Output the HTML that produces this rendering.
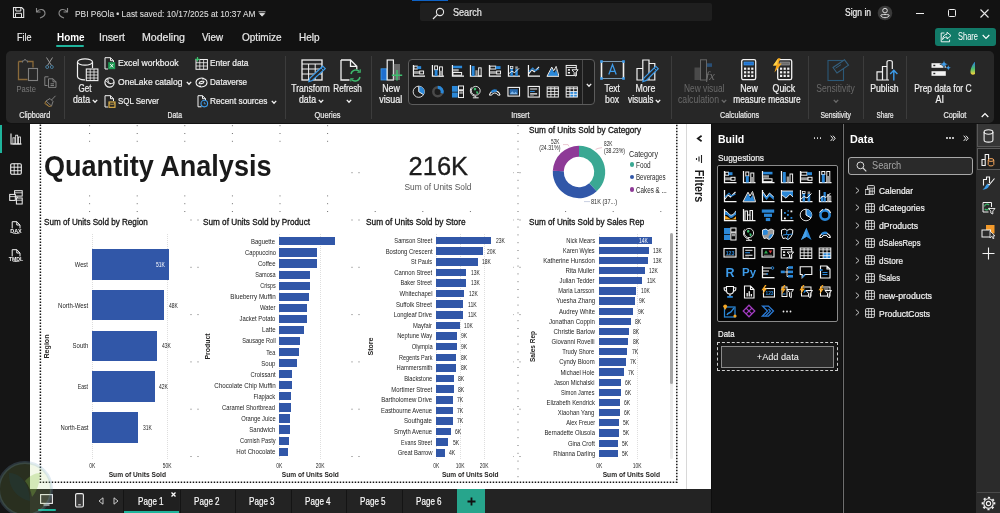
<!DOCTYPE html>
<html><head><meta charset="utf-8"><title>PBI</title>
<style>
html,body{margin:0;padding:0;}
body{width:1000px;height:513px;overflow:hidden;background:#111;font-family:"Liberation Sans",sans-serif;position:relative;}
.t{position:absolute;white-space:nowrap;display:block;}
.b{position:absolute;box-sizing:border-box;display:block;}
</style></head><body><div id="app" style="position:absolute;left:0;top:0;width:1000px;height:513px;overflow:hidden;will-change:transform;">
<div class="b" style="left:0px;top:0px;width:1000px;height:124px;background:#121212;"></div>
<div class="b" style="left:420px;top:3px;width:292px;height:18px;background:#1f1f1f;border-radius:2px;"></div>
<div class="b" style="left:412px;top:0px;width:36px;height:1px;background:#0f62c4;"></div>
<svg class="b" style="left:432px;top:6.6px;" width="13" height="13" viewBox="0 0 13 13"><circle cx="8" cy="5" r="3.6" fill="none" stroke="#e6e6e6" stroke-width="1.1"/><path d="M5.4 7.6 L1 12" stroke="#e6e6e6" stroke-width="1.2" fill="none"/></svg>
<span class="t" style="left:452.50px;top:6.30px;font-size:10.5px;line-height:12.60px;color:#e6e6e6;-webkit-text-stroke:0.22px #e6e6e6;transform:scaleX(0.8656);transform-origin:0 50%;">Search</span>
<svg class="b" style="left:12px;top:6px;" width="13" height="13" viewBox="0 0 13 13"><path d="M1.5 1.5 h8.2 l2 2 v8 h-10.2z" fill="none" stroke="#e6e6e6" stroke-width="1.1"/><path d="M3.8 1.8 v3.2 h5 v-3.2 M3.5 11.3 v-4 h6 v4" fill="none" stroke="#e6e6e6" stroke-width="1"/></svg>
<svg class="b" style="left:35px;top:7px;" width="12" height="12" viewBox="0 0 12 12"><path d="M1.5 1 v4 h4 M1.8 4.8 C4 1.5 9.5 1.5 10 6 C10.2 8.5 8 10 5 11" fill="none" stroke="#8a8a8a" stroke-width="1.1"/></svg>
<svg class="b" style="left:57px;top:7px;" width="12" height="12" viewBox="0 0 12 12"><path d="M10.5 1 v4 h-4 M10.2 4.8 C8 1.5 2.5 1.5 2 6 C1.8 8.5 4 10 7 11" fill="none" stroke="#8a8a8a" stroke-width="1.1"/></svg>
<span class="t" style="left:74.50px;top:8.10px;font-size:9.5px;line-height:11.40px;color:#dcdcdc;transform:scaleX(0.8802);transform-origin:0 50%;-webkit-text-stroke:0.1px #dcdcdc;">PBI P6Ola • Last saved: 10/17/2025 at 10:37 AM</span>
<svg class="b" style="left:258px;top:10.5px;" width="9" height="6" viewBox="0 0 9 6"><path d="M0.5 0.8 h7 M1.6 2.6 h5 l-2.5 2.6z" stroke="#ddd" stroke-width="0.9" fill="#ddd"/></svg>
<span class="t" style="left:844.50px;top:6.80px;font-size:10px;line-height:12.00px;color:#eeeeee;-webkit-text-stroke:0.22px #eeeeee;transform:scaleX(0.8503);transform-origin:0 50%;">Sign in</span>
<svg class="b" style="left:877px;top:4.8px;" width="16" height="16" viewBox="0 0 16 16"><circle cx="8" cy="8" r="7.3" fill="#3a3a3a"/><circle cx="8" cy="5.6" r="2.3" fill="none" stroke="#ddd" stroke-width="1"/><path d="M3.8 10.2 C4 13.5 12 13.5 12.2 10.2 C12.2 9.3 3.8 9.3 3.8 10.2z" fill="none" stroke="#ddd" stroke-width="1"/></svg>
<div class="b" style="left:916px;top:12.5px;width:8px;height:1.2px;background:#eeeeee;"></div>
<div class="b" style="left:948px;top:8.6px;width:8.4px;height:8.4px;border:1.2px solid #eeeeee;border-radius:1.5px;"></div>
<svg class="b" style="left:980px;top:8.6px;" width="9" height="9" viewBox="0 0 9 9"><path d="M0.5 0.5 L8.5 8.5 M8.5 0.5 L0.5 8.5" stroke="#e6e6e6" stroke-width="1.1"/></svg>
<span class="t" style="left:16.50px;top:31.20px;font-size:10.5px;line-height:12.60px;color:#e6e6e6;-webkit-text-stroke:0.22px #e6e6e6;transform:scaleX(0.8570);transform-origin:0 50%;">File</span>
<span class="t" style="left:56.50px;top:31.20px;font-size:10.5px;line-height:12.60px;color:#fff;font-weight:bold;transform:scaleX(0.9427);transform-origin:0 50%;">Home</span>
<div class="b" style="left:56px;top:45px;width:28px;height:2px;background:#1fb49c;border-radius:1px;"></div>
<span class="t" style="left:99.00px;top:31.20px;font-size:10.5px;line-height:12.60px;color:#e6e6e6;-webkit-text-stroke:0.22px #e6e6e6;transform:scaleX(0.9901);transform-origin:0 50%;">Insert</span>
<span class="t" style="left:142.00px;top:31.20px;font-size:10.5px;line-height:12.60px;color:#e6e6e6;-webkit-text-stroke:0.22px #e6e6e6;transform:scaleX(1.0091);transform-origin:0 50%;">Modeling</span>
<span class="t" style="left:202.00px;top:31.20px;font-size:10.5px;line-height:12.60px;color:#e6e6e6;-webkit-text-stroke:0.22px #e6e6e6;transform:scaleX(0.9304);transform-origin:0 50%;">View</span>
<span class="t" style="left:242.00px;top:31.20px;font-size:10.5px;line-height:12.60px;color:#e6e6e6;-webkit-text-stroke:0.22px #e6e6e6;transform:scaleX(0.9535);transform-origin:0 50%;">Optimize</span>
<span class="t" style="left:299.00px;top:31.20px;font-size:10.5px;line-height:12.60px;color:#e6e6e6;-webkit-text-stroke:0.22px #e6e6e6;transform:scaleX(0.9493);transform-origin:0 50%;">Help</span>
<div class="b" style="left:935px;top:28px;width:61px;height:18px;background:#127a68;border-radius:3px;"></div>
<svg class="b" style="left:940px;top:31px;" width="12" height="12" viewBox="0 0 12 12"><path d="M7 1.2 L11 4.6 L7 8 V6 C4.5 6 3.4 7 2.6 8.6 C2.8 5.4 4.4 3.4 7 3.2z" fill="none" stroke="#fff" stroke-width="0.9" stroke-linejoin="round"/><path d="M4.4 2 H1.2 V10.8 H9.6 V8.6" fill="none" stroke="#fff" stroke-width="0.9"/></svg>
<span class="t" style="left:958.00px;top:31.00px;font-size:10px;line-height:12.00px;color:#fff;transform:scaleX(0.7495);transform-origin:0 50%;">Share</span>
<svg class="b" style="left:982px;top:34px;" width="8" height="6" viewBox="0 0 8 6"><path d="M0.7 1 L4 4.4 L7.3 1" fill="none" stroke="#fff" stroke-width="1.1"/></svg>
<div class="b" style="left:6px;top:51px;width:988px;height:72px;background:#272727;border-radius:5px;"></div>
<div class="b" style="left:63.5px;top:56px;width:1px;height:63px;background:#3c3c3c;"></div>
<div class="b" style="left:284.5px;top:56px;width:1px;height:63px;background:#3c3c3c;"></div>
<div class="b" style="left:370.5px;top:56px;width:1px;height:63px;background:#3c3c3c;"></div>
<div class="b" style="left:670.5px;top:56px;width:1px;height:63px;background:#3c3c3c;"></div>
<div class="b" style="left:808px;top:56px;width:1px;height:63px;background:#3c3c3c;"></div>
<div class="b" style="left:862.5px;top:56px;width:1px;height:63px;background:#3c3c3c;"></div>
<div class="b" style="left:906px;top:56px;width:1px;height:63px;background:#3c3c3c;"></div>
<span class="t" style="left:16.74px;top:110.52px;font-size:8.3px;line-height:9.96px;color:#e8e8e8;-webkit-text-stroke:0.22px #e8e8e8;transform:scaleX(0.8726);transform-origin:50% 50%;">Clipboard</span>
<span class="t" style="left:166.23px;top:110.52px;font-size:8.3px;line-height:9.96px;color:#e8e8e8;-webkit-text-stroke:0.22px #e8e8e8;transform:scaleX(0.8270);transform-origin:50% 50%;">Data</span>
<span class="t" style="left:312.97px;top:110.52px;font-size:8.3px;line-height:9.96px;color:#e8e8e8;-webkit-text-stroke:0.22px #e8e8e8;transform:scaleX(0.8946);transform-origin:50% 50%;">Queries</span>
<span class="t" style="left:509.62px;top:110.52px;font-size:8.3px;line-height:9.96px;color:#e8e8e8;-webkit-text-stroke:0.22px #e8e8e8;transform:scaleX(0.8912);transform-origin:50% 50%;">Insert</span>
<span class="t" style="left:716.89px;top:110.52px;font-size:8.3px;line-height:9.96px;color:#e8e8e8;-webkit-text-stroke:0.22px #e8e8e8;transform:scaleX(0.8626);transform-origin:50% 50%;">Calculations</span>
<span class="t" style="left:816.82px;top:110.52px;font-size:8.3px;line-height:9.96px;color:#e8e8e8;-webkit-text-stroke:0.22px #e8e8e8;transform:scaleX(0.8163);transform-origin:50% 50%;">Sensitivity</span>
<span class="t" style="left:874.43px;top:110.52px;font-size:8.3px;line-height:9.96px;color:#e8e8e8;-webkit-text-stroke:0.22px #e8e8e8;transform:scaleX(0.7675);transform-origin:50% 50%;">Share</span>
<span class="t" style="left:941.58px;top:110.52px;font-size:8.3px;line-height:9.96px;color:#e8e8e8;-webkit-text-stroke:0.22px #e8e8e8;transform:scaleX(0.8902);transform-origin:50% 50%;">Copilot</span>
<svg class="b" style="left:981px;top:112px;" width="8" height="6" viewBox="0 0 8 6"><path d="M0.7 5 L4 1.6 L7.3 5" fill="none" stroke="#fff" stroke-width="1.2"/></svg>
<span class="t" style="left:14.35px;top:82.80px;font-size:9.5px;line-height:11.40px;color:#7a7a7a;transform:scaleX(0.8027);transform-origin:50% 50%;">Paste</span>
<span class="t" style="left:77.44px;top:82.50px;font-size:10px;line-height:12.00px;color:#f0f0f0;-webkit-text-stroke:0.22px #f0f0f0;transform:scaleX(0.8066);transform-origin:50% 50%;">Get</span>
<span class="t" style="left:73.00px;top:94.00px;font-size:10px;line-height:12.00px;color:#f0f0f0;-webkit-text-stroke:0.22px #f0f0f0;transform:scaleX(0.8734);transform-origin:0 50%;">data</span>
<svg class="b" style="left:91.5px;top:99px;" width="6" height="5" viewBox="0 0 6 5"><path d="M0.8 0.9 L3 3.2 L5.2 0.9" fill="none" stroke="#f0f0f0" stroke-width="1.35"/></svg>
<span class="t" style="left:118.00px;top:56.80px;font-size:9.5px;line-height:11.40px;color:#f0f0f0;-webkit-text-stroke:0.22px #f0f0f0;transform:scaleX(0.9094);transform-origin:0 50%;">Excel workbook</span>
<span class="t" style="left:118.00px;top:75.80px;font-size:9.5px;line-height:11.40px;color:#f0f0f0;-webkit-text-stroke:0.22px #f0f0f0;transform:scaleX(0.8979);transform-origin:0 50%;">OneLake catalog</span>
<svg class="b" style="left:185.5px;top:81px;" width="6" height="5" viewBox="0 0 6 5"><path d="M0.8 0.9 L3 3.2 L5.2 0.9" fill="none" stroke="#f0f0f0" stroke-width="1.35"/></svg>
<span class="t" style="left:118.00px;top:94.80px;font-size:9.5px;line-height:11.40px;color:#f0f0f0;-webkit-text-stroke:0.22px #f0f0f0;transform:scaleX(0.8320);transform-origin:0 50%;">SQL Server</span>
<span class="t" style="left:210.00px;top:56.80px;font-size:9.5px;line-height:11.40px;color:#f0f0f0;-webkit-text-stroke:0.22px #f0f0f0;transform:scaleX(0.8783);transform-origin:0 50%;">Enter data</span>
<span class="t" style="left:210.00px;top:75.80px;font-size:9.5px;line-height:11.40px;color:#f0f0f0;-webkit-text-stroke:0.22px #f0f0f0;transform:scaleX(0.8545);transform-origin:0 50%;">Dataverse</span>
<span class="t" style="left:210.00px;top:94.80px;font-size:9.5px;line-height:11.40px;color:#f0f0f0;-webkit-text-stroke:0.22px #f0f0f0;transform:scaleX(0.8711);transform-origin:0 50%;">Recent sources</span>
<svg class="b" style="left:270.5px;top:100px;" width="6" height="5" viewBox="0 0 6 5"><path d="M0.8 0.9 L3 3.2 L5.2 0.9" fill="none" stroke="#f0f0f0" stroke-width="1.35"/></svg>
<span class="t" style="left:288.40px;top:82.50px;font-size:10px;line-height:12.00px;color:#f0f0f0;-webkit-text-stroke:0.22px #f0f0f0;transform:scaleX(0.8519);transform-origin:50% 50%;">Transform</span>
<span class="t" style="left:299.00px;top:94.00px;font-size:10px;line-height:12.00px;color:#f0f0f0;-webkit-text-stroke:0.22px #f0f0f0;transform:scaleX(0.8734);transform-origin:0 50%;">data</span>
<svg class="b" style="left:317.5px;top:99px;" width="6" height="5" viewBox="0 0 6 5"><path d="M0.8 0.9 L3 3.2 L5.2 0.9" fill="none" stroke="#f0f0f0" stroke-width="1.35"/></svg>
<span class="t" style="left:330.49px;top:82.50px;font-size:10px;line-height:12.00px;color:#f0f0f0;-webkit-text-stroke:0.22px #f0f0f0;transform:scaleX(0.8139);transform-origin:50% 50%;">Refresh</span>
<svg class="b" style="left:345.5px;top:99px;" width="6" height="5" viewBox="0 0 6 5"><path d="M0.8 0.9 L3 3.2 L5.2 0.9" fill="none" stroke="#f0f0f0" stroke-width="1.35"/></svg>
<span class="t" style="left:381.00px;top:82.50px;font-size:10px;line-height:12.00px;color:#f0f0f0;-webkit-text-stroke:0.22px #f0f0f0;transform:scaleX(0.8748);transform-origin:50% 50%;">New</span>
<span class="t" style="left:377.72px;top:94.00px;font-size:10px;line-height:12.00px;color:#f0f0f0;-webkit-text-stroke:0.22px #f0f0f0;transform:scaleX(0.8996);transform-origin:50% 50%;">visual</span>
<div class="b" style="left:408px;top:59px;width:187px;height:45.5px;background:#1d1d1d;border:1px solid #5c5c5c;border-radius:4px;"></div>
<div class="b" style="left:582px;top:60px;width:1px;height:43.5px;background:#4a4a4a;"></div>
<svg class="b" style="left:585.5px;top:83px;" width="6" height="5" viewBox="0 0 6 5"><path d="M0.8 0.9 L3 3.2 L5.2 0.9" fill="none" stroke="#f0f0f0" stroke-width="1.35"/></svg>
<span class="t" style="left:603.33px;top:82.50px;font-size:10px;line-height:12.00px;color:#f0f0f0;-webkit-text-stroke:0.22px #f0f0f0;transform:scaleX(0.8452);transform-origin:50% 50%;">Text</span>
<span class="t" style="left:603.94px;top:94.00px;font-size:10px;line-height:12.00px;color:#f0f0f0;-webkit-text-stroke:0.22px #f0f0f0;transform:scaleX(0.8683);transform-origin:50% 50%;">box</span>
<span class="t" style="left:634.11px;top:82.50px;font-size:10px;line-height:12.00px;color:#f0f0f0;-webkit-text-stroke:0.22px #f0f0f0;transform:scaleX(0.8778);transform-origin:50% 50%;">More</span>
<span class="t" style="left:628.00px;top:94.00px;font-size:10px;line-height:12.00px;color:#f0f0f0;-webkit-text-stroke:0.22px #f0f0f0;transform:scaleX(0.8342);transform-origin:0 50%;">visuals</span>
<svg class="b" style="left:655px;top:99px;" width="6" height="5" viewBox="0 0 6 5"><path d="M0.8 0.9 L3 3.2 L5.2 0.9" fill="none" stroke="#f0f0f0" stroke-width="1.35"/></svg>
<span class="t" style="left:679.82px;top:82.50px;font-size:10px;line-height:12.00px;color:#6a6a6a;transform:scaleX(0.8376);transform-origin:50% 50%;">New visual</span>
<span class="t" style="left:678.00px;top:94.00px;font-size:10px;line-height:12.00px;color:#6a6a6a;transform:scaleX(0.8677);transform-origin:0 50%;">calculation</span>
<svg class="b" style="left:720.5px;top:99px;" width="6" height="5" viewBox="0 0 6 5"><path d="M0.8 0.9 L3 3.2 L5.2 0.9" fill="none" stroke="#6a6a6a" stroke-width="1.35"/></svg>
<span class="t" style="left:739.00px;top:82.50px;font-size:10px;line-height:12.00px;color:#f0f0f0;-webkit-text-stroke:0.22px #f0f0f0;transform:scaleX(0.8748);transform-origin:50% 50%;">New</span>
<span class="t" style="left:729.55px;top:94.00px;font-size:10px;line-height:12.00px;color:#f0f0f0;-webkit-text-stroke:0.22px #f0f0f0;transform:scaleX(0.8353);transform-origin:50% 50%;">measure</span>
<span class="t" style="left:771.22px;top:82.50px;font-size:10px;line-height:12.00px;color:#f0f0f0;-webkit-text-stroke:0.22px #f0f0f0;transform:scaleX(0.8802);transform-origin:50% 50%;">Quick</span>
<span class="t" style="left:764.55px;top:94.00px;font-size:10px;line-height:12.00px;color:#f0f0f0;-webkit-text-stroke:0.22px #f0f0f0;transform:scaleX(0.8353);transform-origin:50% 50%;">measure</span>
<span class="t" style="left:812.99px;top:82.50px;font-size:10px;line-height:12.00px;color:#6a6a6a;transform:scaleX(0.8553);transform-origin:50% 50%;">Sensitivity</span>
<svg class="b" style="left:832.5px;top:99px;" width="6" height="5" viewBox="0 0 6 5"><path d="M0.8 0.9 L3 3.2 L5.2 0.9" fill="none" stroke="#6a6a6a" stroke-width="1.35"/></svg>
<span class="t" style="left:868.10px;top:82.50px;font-size:10px;line-height:12.00px;color:#f0f0f0;-webkit-text-stroke:0.22px #f0f0f0;transform:scaleX(0.8689);transform-origin:50% 50%;">Publish</span>
<span class="t" style="left:909.09px;top:82.50px;font-size:10px;line-height:12.00px;color:#f0f0f0;-webkit-text-stroke:0.22px #f0f0f0;transform:scaleX(0.8479);transform-origin:50% 50%;">Prep data for C</span>
<span class="t" style="left:935.28px;top:94.00px;font-size:10px;line-height:12.00px;color:#f0f0f0;-webkit-text-stroke:0.22px #f0f0f0;transform:scaleX(0.8996);transform-origin:50% 50%;">AI</span>
<div class="b" style="left:0px;top:124px;width:30px;height:389px;background:#151515;"></div>
<div class="b" style="left:0px;top:125px;width:2px;height:28px;background:#1fb49c;"></div>
<div class="b" style="left:30px;top:124px;width:657px;height:365px;background:#ffffff;"></div>
<div class="b" style="left:686px;top:124px;width:1px;height:365px;background:#d8d8d8;"></div>
<div class="b" style="left:687px;top:124px;width:24px;height:365px;background:#ffffff;"></div>
<svg class="b" style="left:0;top:0" width="700" height="490" viewBox="0 0 700 490"><defs><pattern id="gv" x="41.5" y="125.2" width="47.6" height="7.8" patternUnits="userSpaceOnUse"><rect x="0" y="0" width="1" height="1" fill="#6e6e6e"/></pattern><pattern id="gh" x="43.5" y="124.9" width="7" height="47.3" patternUnits="userSpaceOnUse"><rect x="0" y="0" width="1" height="1" fill="#6e6e6e"/></pattern></defs><rect x="60" y="124" width="612" height="357" fill="url(#gv)"/><rect x="43" y="160" width="632" height="318" fill="url(#gh)"/></svg>
<div class="b" style="left:42.5px;top:143px;width:305px;height:48px;background:#fff;"></div>
<div class="b" style="left:363px;top:124.5px;width:150px;height:82.5px;background:#fff;"></div>
<div class="b" style="left:523px;top:124.5px;width:153.5px;height:84px;background:#fff;"></div>
<div class="b" style="left:42.5px;top:214.5px;width:146px;height:266px;background:#fff;"></div>
<div class="b" style="left:200px;top:214.5px;width:148px;height:266px;background:#fff;"></div>
<div class="b" style="left:363px;top:214.5px;width:150px;height:266px;background:#fff;"></div>
<div class="b" style="left:523px;top:214.5px;width:153.5px;height:266px;background:#fff;"></div>
<svg class="b" style="left:0;top:0" width="700" height="490" viewBox="0 0 700 490"><path d="M40.4 124.5 V482.2 H676.8 V124.5" fill="none" stroke="#161616" stroke-width="1.5" stroke-dasharray="1.5 1.5"/></svg>
<span class="t" style="left:43.50px;top:148.30px;font-size:29.5px;line-height:35.40px;color:#1a1a1a;font-weight:bold;transform:scaleX(0.9170);transform-origin:0 50%;">Quantity Analysis</span>
<span class="t" style="left:408.14px;top:150.90px;font-size:26px;line-height:31.20px;color:#1c1c1c;transform:scaleX(0.9798);transform-origin:50% 50%;-webkit-text-stroke:0.35px #1c1c1c;">216K</span>
<span class="t" style="left:404.48px;top:181.90px;font-size:8.5px;line-height:10.20px;color:#555;transform:scaleX(0.9849);transform-origin:50% 50%;">Sum of Units Sold</span>
<span class="t" style="left:43.50px;top:216.60px;font-size:9px;line-height:10.80px;color:#141414;transform:scaleX(0.9013);transform-origin:0 50%;-webkit-text-stroke:0.3px #141414;">Sum of Units Sold by Region</span>
<span class="t" style="left:202.60px;top:216.60px;font-size:9px;line-height:10.80px;color:#141414;transform:scaleX(0.9102);transform-origin:0 50%;-webkit-text-stroke:0.3px #141414;">Sum of Units Sold by Product</span>
<span class="t" style="left:366.00px;top:216.60px;font-size:9px;line-height:10.80px;color:#141414;transform:scaleX(0.9209);transform-origin:0 50%;-webkit-text-stroke:0.3px #141414;">Sum of Units Sold by Store</span>
<span class="t" style="left:528.60px;top:216.60px;font-size:9px;line-height:10.80px;color:#141414;transform:scaleX(0.8996);transform-origin:0 50%;-webkit-text-stroke:0.3px #141414;">Sum of Units Sold by Sales Rep</span>
<span class="t" style="left:528.50px;top:124.80px;font-size:9px;line-height:10.80px;color:#141414;transform:scaleX(0.9118);transform-origin:0 50%;-webkit-text-stroke:0.3px #141414;">Sum of Units Sold by Category</span>
<div class="b" style="left:92px;top:234px;width:0;height:225px;border-left:1px dotted #dedede;"></div>
<div class="b" style="left:167px;top:234px;width:0;height:225px;border-left:1px dotted #dedede;"></div>
<div class="b" style="left:92.2px;top:249.0px;width:77.0px;height:30.6px;background:#3157a8;"></div>
<span class="t" style="left:72.18px;top:260.70px;font-size:7px;line-height:8.40px;color:#1e1e1e;transform:scaleX(0.8218);transform-origin:100% 50%;">West</span>
<span class="t" style="left:155.50px;top:260.70px;font-size:7px;line-height:8.40px;color:#fff;transform:scaleX(0.7065);transform-origin:0 50%;">51K</span>
<div class="b" style="left:92.2px;top:289.8px;width:71.5px;height:30.6px;background:#3157a8;"></div>
<span class="t" style="left:52.73px;top:301.50px;font-size:7px;line-height:8.40px;color:#1e1e1e;transform:scaleX(0.8563);transform-origin:100% 50%;">North-West</span>
<span class="t" style="left:168.60px;top:301.50px;font-size:7px;line-height:8.40px;color:#1e1e1e;transform:scaleX(0.7065);transform-origin:0 50%;">48K</span>
<div class="b" style="left:92.2px;top:330.6px;width:64.8px;height:30.6px;background:#3157a8;"></div>
<span class="t" style="left:69.71px;top:342.30px;font-size:7px;line-height:8.40px;color:#1e1e1e;transform:scaleX(0.8582);transform-origin:100% 50%;">South</span>
<span class="t" style="left:161.50px;top:342.30px;font-size:7px;line-height:8.40px;color:#1e1e1e;transform:scaleX(0.7065);transform-origin:0 50%;">43K</span>
<div class="b" style="left:92.2px;top:371.4px;width:62.5px;height:30.6px;background:#3157a8;"></div>
<span class="t" style="left:73.99px;top:383.10px;font-size:7px;line-height:8.40px;color:#1e1e1e;transform:scaleX(0.7353);transform-origin:100% 50%;">East</span>
<span class="t" style="left:158.80px;top:383.10px;font-size:7px;line-height:8.40px;color:#1e1e1e;transform:scaleX(0.7065);transform-origin:0 50%;">42K</span>
<div class="b" style="left:92.2px;top:412.2px;width:45.8px;height:30.6px;background:#3157a8;"></div>
<span class="t" style="left:54.54px;top:423.90px;font-size:7px;line-height:8.40px;color:#1e1e1e;transform:scaleX(0.8369);transform-origin:100% 50%;">North-East</span>
<span class="t" style="left:142.70px;top:423.90px;font-size:7px;line-height:8.40px;color:#1e1e1e;transform:scaleX(0.7065);transform-origin:0 50%;">31K</span>
<span class="t" style="left:87.92px;top:462.10px;font-size:7px;line-height:8.40px;color:#2a2a2a;transform:scaleX(0.7007);transform-origin:50% 50%;">0K</span>
<span class="t" style="left:160.97px;top:462.10px;font-size:7px;line-height:8.40px;color:#2a2a2a;transform:scaleX(0.7065);transform-origin:50% 50%;">50K</span>
<span class="t" style="left:104.71px;top:470.20px;font-size:7.5px;line-height:9.00px;color:#252423;font-weight:bold;transform:scaleX(0.8872);transform-origin:50% 50%;">Sum of Units Sold</span>
<span class="t" style="left:34.29px;top:341.50px;font-size:7.5px;line-height:9px;font-weight:bold;color:#252423;transform:rotate(-90deg) scaleX(0.944);transform-origin:50% 50%;">Region</span>
<div class="b" style="left:279px;top:234px;width:0;height:225px;border-left:1px dotted #dedede;"></div>
<div class="b" style="left:320px;top:234px;width:0;height:225px;border-left:1px dotted #dedede;"></div>
<div class="b" style="left:279px;top:237.3px;width:55.7px;height:8.2px;background:#3157a8;"></div>
<span class="t" style="left:247.48px;top:237.80px;font-size:7px;line-height:8.40px;color:#1e1e1e;transform:scaleX(0.8564);transform-origin:100% 50%;">Baguette</span>
<div class="b" style="left:279px;top:248.37px;width:38.2px;height:8.2px;background:#3157a8;"></div>
<span class="t" style="left:238.53px;top:248.87px;font-size:7px;line-height:8.40px;color:#1e1e1e;transform:scaleX(0.8385);transform-origin:100% 50%;">Cappuccino</span>
<div class="b" style="left:279px;top:259.44px;width:38.2px;height:8.2px;background:#3157a8;"></div>
<span class="t" style="left:255.00px;top:259.94px;font-size:7px;line-height:8.40px;color:#1e1e1e;transform:scaleX(0.8537);transform-origin:100% 50%;">Coffee</span>
<div class="b" style="left:279px;top:270.51px;width:31px;height:8.2px;background:#3157a8;"></div>
<span class="t" style="left:249.82px;top:271.01px;font-size:7px;line-height:8.40px;color:#1e1e1e;transform:scaleX(0.7983);transform-origin:100% 50%;">Samosa</span>
<div class="b" style="left:279px;top:281.58px;width:30.6px;height:8.2px;background:#3157a8;"></div>
<span class="t" style="left:255.66px;top:282.08px;font-size:7px;line-height:8.40px;color:#1e1e1e;transform:scaleX(0.7814);transform-origin:100% 50%;">Crisps</span>
<div class="b" style="left:279px;top:292.65px;width:29.8px;height:8.2px;background:#3157a8;"></div>
<span class="t" style="left:224.66px;top:293.15px;font-size:7px;line-height:8.40px;color:#1e1e1e;transform:scaleX(0.8950);transform-origin:100% 50%;">Blueberry Muffin</span>
<div class="b" style="left:279px;top:303.72px;width:27.9px;height:8.2px;background:#3157a8;"></div>
<span class="t" style="left:257.09px;top:304.22px;font-size:7px;line-height:8.40px;color:#1e1e1e;transform:scaleX(0.8420);transform-origin:100% 50%;">Water</span>
<div class="b" style="left:279px;top:314.79px;width:27.9px;height:8.2px;background:#3157a8;"></div>
<span class="t" style="left:233.09px;top:315.29px;font-size:7px;line-height:8.40px;color:#1e1e1e;transform:scaleX(0.8488);transform-origin:100% 50%;">Jacket Potato</span>
<div class="b" style="left:279px;top:325.86px;width:24.9px;height:8.2px;background:#3157a8;"></div>
<span class="t" style="left:259.93px;top:326.36px;font-size:7px;line-height:8.40px;color:#1e1e1e;transform:scaleX(0.8671);transform-origin:100% 50%;">Latte</span>
<div class="b" style="left:279px;top:336.93px;width:20.8px;height:8.2px;background:#3157a8;"></div>
<span class="t" style="left:233.86px;top:337.43px;font-size:7px;line-height:8.40px;color:#1e1e1e;transform:scaleX(0.8045);transform-origin:100% 50%;">Sausage Roll</span>
<div class="b" style="left:279px;top:348.0px;width:20px;height:8.2px;background:#3157a8;"></div>
<span class="t" style="left:264.21px;top:348.50px;font-size:7px;line-height:8.40px;color:#1e1e1e;transform:scaleX(0.7974);transform-origin:100% 50%;">Tea</span>
<div class="b" style="left:279px;top:359.07px;width:17.5px;height:8.2px;background:#3157a8;"></div>
<span class="t" style="left:259.15px;top:359.57px;font-size:7px;line-height:8.40px;color:#1e1e1e;transform:scaleX(0.8563);transform-origin:100% 50%;">Soup</span>
<div class="b" style="left:279px;top:370.14px;width:12.9px;height:8.2px;background:#3157a8;"></div>
<span class="t" style="left:245.93px;top:370.64px;font-size:7px;line-height:8.40px;color:#1e1e1e;transform:scaleX(0.8456);transform-origin:100% 50%;">Croissant</span>
<div class="b" style="left:279px;top:381.21px;width:12.6px;height:8.2px;background:#3157a8;"></div>
<span class="t" style="left:206.76px;top:381.71px;font-size:7px;line-height:8.40px;color:#1e1e1e;transform:scaleX(0.8946);transform-origin:100% 50%;">Chocolate Chip Muffin</span>
<div class="b" style="left:279px;top:392.28px;width:12px;height:8.2px;background:#3157a8;"></div>
<span class="t" style="left:249.43px;top:392.78px;font-size:7px;line-height:8.40px;color:#1e1e1e;transform:scaleX(0.8248);transform-origin:100% 50%;">Flapjack</span>
<div class="b" style="left:279px;top:403.35px;width:11.8px;height:8.2px;background:#3157a8;"></div>
<span class="t" style="left:212.47px;top:403.85px;font-size:7px;line-height:8.40px;color:#1e1e1e;transform:scaleX(0.8408);transform-origin:100% 50%;">Caramel Shortbread</span>
<div class="b" style="left:279px;top:414.42px;width:11px;height:8.2px;background:#3157a8;"></div>
<span class="t" style="left:233.86px;top:414.92px;font-size:7px;line-height:8.40px;color:#1e1e1e;transform:scaleX(0.8286);transform-origin:100% 50%;">Orange Juice</span>
<div class="b" style="left:279px;top:425.49px;width:10.7px;height:8.2px;background:#3157a8;"></div>
<span class="t" style="left:245.15px;top:425.99px;font-size:7px;line-height:8.40px;color:#1e1e1e;transform:scaleX(0.8566);transform-origin:100% 50%;">Sandwich</span>
<div class="b" style="left:279px;top:436.56px;width:9.6px;height:8.2px;background:#3157a8;"></div>
<span class="t" style="left:231.93px;top:437.06px;font-size:7px;line-height:8.40px;color:#1e1e1e;transform:scaleX(0.8147);transform-origin:100% 50%;">Cornish Pasty</span>
<div class="b" style="left:279px;top:447.63px;width:9px;height:8.2px;background:#3157a8;"></div>
<span class="t" style="left:231.14px;top:448.13px;font-size:7px;line-height:8.40px;color:#1e1e1e;transform:scaleX(0.8792);transform-origin:100% 50%;">Hot Chocolate</span>
<span class="t" style="left:274.72px;top:462.10px;font-size:7px;line-height:8.40px;color:#2a2a2a;transform:scaleX(0.7007);transform-origin:50% 50%;">0K</span>
<span class="t" style="left:314.27px;top:462.10px;font-size:7px;line-height:8.40px;color:#2a2a2a;transform:scaleX(0.7065);transform-origin:50% 50%;">20K</span>
<span class="t" style="left:278.01px;top:470.20px;font-size:7.5px;line-height:9.00px;color:#252423;font-weight:bold;transform:scaleX(0.8826);transform-origin:50% 50%;">Sum of Units Sold</span>
<span class="t" style="left:192.83px;top:341.50px;font-size:7.5px;line-height:9px;font-weight:bold;color:#252423;transform:rotate(-90deg) scaleX(0.918);transform-origin:50% 50%;">Product</span>
<div class="b" style="left:436px;top:234px;width:0;height:225px;border-left:1px dotted #dedede;"></div>
<div class="b" style="left:460px;top:234px;width:0;height:225px;border-left:1px dotted #dedede;"></div>
<div class="b" style="left:484px;top:234px;width:0;height:225px;border-left:1px dotted #dedede;"></div>
<div class="b" style="left:436px;top:236.7px;width:54.6px;height:7.6px;background:#3157a8;"></div>
<span class="t" style="left:385.90px;top:236.90px;font-size:7px;line-height:8.40px;color:#1e1e1e;transform:scaleX(0.8207);transform-origin:100% 50%;">Samson Street</span>
<span class="t" style="left:495.50px;top:236.90px;font-size:7px;line-height:8.40px;color:#1e1e1e;transform:scaleX(0.7065);transform-origin:0 50%;">23K</span>
<div class="b" style="left:436px;top:247.32px;width:46.7px;height:7.6px;background:#3157a8;"></div>
<span class="t" style="left:376.56px;top:247.52px;font-size:7px;line-height:8.40px;color:#1e1e1e;transform:scaleX(0.8447);transform-origin:100% 50%;">Bostong Crescent</span>
<span class="t" style="left:487.30px;top:247.52px;font-size:7px;line-height:8.40px;color:#1e1e1e;transform:scaleX(0.7065);transform-origin:0 50%;">20K</span>
<div class="b" style="left:436px;top:257.94px;width:41.8px;height:7.6px;background:#3157a8;"></div>
<span class="t" style="left:406.13px;top:258.14px;font-size:7px;line-height:8.40px;color:#1e1e1e;transform:scaleX(0.8055);transform-origin:100% 50%;">St Pauls</span>
<span class="t" style="left:482.40px;top:258.14px;font-size:7px;line-height:8.40px;color:#1e1e1e;transform:scaleX(0.7065);transform-origin:0 50%;">18K</span>
<div class="b" style="left:436px;top:268.56px;width:29.8px;height:7.6px;background:#3157a8;"></div>
<span class="t" style="left:387.06px;top:268.76px;font-size:7px;line-height:8.40px;color:#1e1e1e;transform:scaleX(0.8418);transform-origin:100% 50%;">Cannon Street</span>
<span class="t" style="left:470.70px;top:268.76px;font-size:7px;line-height:8.40px;color:#1e1e1e;transform:scaleX(0.7065);transform-origin:0 50%;">13K</span>
<div class="b" style="left:436px;top:279.18px;width:29.8px;height:7.6px;background:#3157a8;"></div>
<span class="t" style="left:393.29px;top:279.38px;font-size:7px;line-height:8.40px;color:#1e1e1e;transform:scaleX(0.8096);transform-origin:100% 50%;">Baker Street</span>
<span class="t" style="left:470.70px;top:279.38px;font-size:7px;line-height:8.40px;color:#1e1e1e;transform:scaleX(0.7065);transform-origin:0 50%;">13K</span>
<div class="b" style="left:436px;top:289.8px;width:27.6px;height:7.6px;background:#3157a8;"></div>
<span class="t" style="left:393.68px;top:290.00px;font-size:7px;line-height:8.40px;color:#1e1e1e;transform:scaleX(0.8567);transform-origin:100% 50%;">Whitechapel</span>
<span class="t" style="left:468.80px;top:290.00px;font-size:7px;line-height:8.40px;color:#1e1e1e;transform:scaleX(0.7065);transform-origin:0 50%;">12K</span>
<div class="b" style="left:436px;top:300.42px;width:26.8px;height:7.6px;background:#3157a8;"></div>
<span class="t" style="left:390.31px;top:300.62px;font-size:7px;line-height:8.40px;color:#1e1e1e;transform:scaleX(0.8593);transform-origin:100% 50%;">Suffolk Street</span>
<span class="t" style="left:468.00px;top:300.62px;font-size:7px;line-height:8.40px;color:#1e1e1e;transform:scaleX(0.7373);transform-origin:0 50%;">11K</span>
<div class="b" style="left:436px;top:311.04px;width:26.8px;height:7.6px;background:#3157a8;"></div>
<span class="t" style="left:387.06px;top:311.24px;font-size:7px;line-height:8.40px;color:#1e1e1e;transform:scaleX(0.8529);transform-origin:100% 50%;">Longleaf Drive</span>
<span class="t" style="left:468.00px;top:311.24px;font-size:7px;line-height:8.40px;color:#1e1e1e;transform:scaleX(0.7373);transform-origin:0 50%;">11K</span>
<div class="b" style="left:436px;top:321.66px;width:23.5px;height:7.6px;background:#3157a8;"></div>
<span class="t" style="left:409.25px;top:321.86px;font-size:7px;line-height:8.40px;color:#1e1e1e;transform:scaleX(0.8279);transform-origin:100% 50%;">Mayfair</span>
<span class="t" style="left:463.60px;top:321.86px;font-size:7px;line-height:8.40px;color:#1e1e1e;transform:scaleX(0.7065);transform-origin:0 50%;">10K</span>
<div class="b" style="left:436px;top:332.28px;width:20.8px;height:7.6px;background:#3157a8;"></div>
<span class="t" style="left:390.05px;top:332.48px;font-size:7px;line-height:8.40px;color:#1e1e1e;transform:scaleX(0.8303);transform-origin:100% 50%;">Neptune Way</span>
<span class="t" style="left:460.90px;top:332.48px;font-size:7px;line-height:8.40px;color:#1e1e1e;transform:scaleX(0.7241);transform-origin:0 50%;">9K</span>
<div class="b" style="left:436px;top:342.9px;width:20.8px;height:7.6px;background:#3157a8;"></div>
<span class="t" style="left:406.53px;top:343.10px;font-size:7px;line-height:8.40px;color:#1e1e1e;transform:scaleX(0.8180);transform-origin:100% 50%;">Olympia</span>
<span class="t" style="left:460.90px;top:343.10px;font-size:7px;line-height:8.40px;color:#1e1e1e;transform:scaleX(0.7241);transform-origin:0 50%;">9K</span>
<div class="b" style="left:436px;top:353.52px;width:20px;height:7.6px;background:#3157a8;"></div>
<span class="t" style="left:389.79px;top:353.72px;font-size:7px;line-height:8.40px;color:#1e1e1e;transform:scaleX(0.7899);transform-origin:100% 50%;">Regents Park</span>
<span class="t" style="left:460.60px;top:353.72px;font-size:7px;line-height:8.40px;color:#1e1e1e;transform:scaleX(0.7241);transform-origin:0 50%;">8K</span>
<div class="b" style="left:436px;top:364.14px;width:20px;height:7.6px;background:#3157a8;"></div>
<span class="t" style="left:388.64px;top:364.34px;font-size:7px;line-height:8.40px;color:#1e1e1e;transform:scaleX(0.8264);transform-origin:100% 50%;">Hammersmith</span>
<span class="t" style="left:460.60px;top:364.34px;font-size:7px;line-height:8.40px;color:#1e1e1e;transform:scaleX(0.7241);transform-origin:0 50%;">8K</span>
<div class="b" style="left:436px;top:374.76px;width:18px;height:7.6px;background:#3157a8;"></div>
<span class="t" style="left:397.96px;top:374.96px;font-size:7px;line-height:8.40px;color:#1e1e1e;transform:scaleX(0.8177);transform-origin:100% 50%;">Blackstone</span>
<span class="t" style="left:458.00px;top:374.96px;font-size:7px;line-height:8.40px;color:#1e1e1e;transform:scaleX(0.7241);transform-origin:0 50%;">8K</span>
<div class="b" style="left:436px;top:385.38px;width:17.8px;height:7.6px;background:#3157a8;"></div>
<span class="t" style="left:383.97px;top:385.58px;font-size:7px;line-height:8.40px;color:#1e1e1e;transform:scaleX(0.8500);transform-origin:100% 50%;">Mortimer Street</span>
<span class="t" style="left:458.00px;top:385.58px;font-size:7px;line-height:8.40px;color:#1e1e1e;transform:scaleX(0.7241);transform-origin:0 50%;">8K</span>
<div class="b" style="left:436px;top:396.0px;width:16.7px;height:7.6px;background:#3157a8;"></div>
<span class="t" style="left:373.07px;top:396.20px;font-size:7px;line-height:8.40px;color:#1e1e1e;transform:scaleX(0.8625);transform-origin:100% 50%;">Bartholomew Drive</span>
<span class="t" style="left:457.00px;top:396.20px;font-size:7px;line-height:8.40px;color:#1e1e1e;transform:scaleX(0.7241);transform-origin:0 50%;">7K</span>
<div class="b" style="left:436px;top:406.62px;width:16.7px;height:7.6px;background:#3157a8;"></div>
<span class="t" style="left:371.22px;top:406.82px;font-size:7px;line-height:8.40px;color:#1e1e1e;transform:scaleX(0.8364);transform-origin:100% 50%;">Eastbourne Avenue</span>
<span class="t" style="left:457.00px;top:406.82px;font-size:7px;line-height:8.40px;color:#1e1e1e;transform:scaleX(0.7241);transform-origin:0 50%;">7K</span>
<div class="b" style="left:436px;top:417.24px;width:16.7px;height:7.6px;background:#3157a8;"></div>
<span class="t" style="left:400.28px;top:417.44px;font-size:7px;line-height:8.40px;color:#1e1e1e;transform:scaleX(0.8773);transform-origin:100% 50%;">Southgate</span>
<span class="t" style="left:457.00px;top:417.44px;font-size:7px;line-height:8.40px;color:#1e1e1e;transform:scaleX(0.7241);transform-origin:0 50%;">7K</span>
<div class="b" style="left:436px;top:427.86px;width:14.5px;height:7.6px;background:#3157a8;"></div>
<span class="t" style="left:387.19px;top:428.06px;font-size:7px;line-height:8.40px;color:#1e1e1e;transform:scaleX(0.8442);transform-origin:100% 50%;">Smyth Avenue</span>
<span class="t" style="left:454.90px;top:428.06px;font-size:7px;line-height:8.40px;color:#1e1e1e;transform:scaleX(0.7241);transform-origin:0 50%;">6K</span>
<div class="b" style="left:436px;top:438.48px;width:11.8px;height:7.6px;background:#3157a8;"></div>
<span class="t" style="left:392.12px;top:438.68px;font-size:7px;line-height:8.40px;color:#1e1e1e;transform:scaleX(0.7735);transform-origin:100% 50%;">Evans Street</span>
<span class="t" style="left:452.70px;top:438.68px;font-size:7px;line-height:8.40px;color:#1e1e1e;transform:scaleX(0.7241);transform-origin:0 50%;">5K</span>
<div class="b" style="left:436px;top:449.1px;width:9px;height:7.6px;background:#3157a8;"></div>
<span class="t" style="left:390.57px;top:449.30px;font-size:7px;line-height:8.40px;color:#1e1e1e;transform:scaleX(0.8408);transform-origin:100% 50%;">Great Barrow</span>
<span class="t" style="left:449.00px;top:449.30px;font-size:7px;line-height:8.40px;color:#1e1e1e;transform:scaleX(0.7241);transform-origin:0 50%;">4K</span>
<span class="t" style="left:431.72px;top:462.10px;font-size:7px;line-height:8.40px;color:#2a2a2a;transform:scaleX(0.7007);transform-origin:50% 50%;">0K</span>
<span class="t" style="left:453.77px;top:462.10px;font-size:7px;line-height:8.40px;color:#2a2a2a;transform:scaleX(0.7065);transform-origin:50% 50%;">10K</span>
<span class="t" style="left:477.57px;top:462.10px;font-size:7px;line-height:8.40px;color:#2a2a2a;transform:scaleX(0.7065);transform-origin:50% 50%;">20K</span>
<span class="t" style="left:438.31px;top:470.20px;font-size:7.5px;line-height:9.00px;color:#252423;font-weight:bold;transform:scaleX(0.8779);transform-origin:50% 50%;">Sum of Units Sold</span>
<span class="t" style="left:361.21px;top:341.50px;font-size:7.5px;line-height:9px;font-weight:bold;color:#252423;transform:rotate(-90deg) scaleX(0.939);transform-origin:50% 50%;">Store</span>
<div class="b" style="left:599px;top:234px;width:0;height:225px;border-left:1px dotted #dedede;"></div>
<div class="b" style="left:637px;top:234px;width:0;height:225px;border-left:1px dotted #dedede;"></div>
<div class="b" style="left:599px;top:236.5px;width:53px;height:7.3px;background:#3157a8;"></div>
<span class="t" style="left:559.70px;top:236.55px;font-size:7px;line-height:8.40px;color:#1e1e1e;transform:scaleX(0.8199);transform-origin:100% 50%;">Nick Mears</span>
<span class="t" style="left:638.60px;top:236.55px;font-size:7px;line-height:8.40px;color:#fff;transform:scaleX(0.7065);transform-origin:0 50%;">14K</span>
<div class="b" style="left:599px;top:246.65px;width:50.2px;height:7.3px;background:#3157a8;"></div>
<span class="t" style="left:555.08px;top:246.70px;font-size:7px;line-height:8.40px;color:#1e1e1e;transform:scaleX(0.7951);transform-origin:100% 50%;">Karen Wyles</span>
<span class="t" style="left:652.80px;top:246.70px;font-size:7px;line-height:8.40px;color:#1e1e1e;transform:scaleX(0.7065);transform-origin:0 50%;">13K</span>
<div class="b" style="left:599px;top:256.8px;width:48.9px;height:7.3px;background:#3157a8;"></div>
<span class="t" style="left:534.77px;top:256.85px;font-size:7px;line-height:8.40px;color:#1e1e1e;transform:scaleX(0.8626);transform-origin:100% 50%;">Katherine Hunsdon</span>
<span class="t" style="left:652.80px;top:256.85px;font-size:7px;line-height:8.40px;color:#1e1e1e;transform:scaleX(0.7065);transform-origin:0 50%;">13K</span>
<div class="b" style="left:599px;top:266.95px;width:45.6px;height:7.3px;background:#3157a8;"></div>
<span class="t" style="left:561.25px;top:267.00px;font-size:7px;line-height:8.40px;color:#1e1e1e;transform:scaleX(0.8669);transform-origin:100% 50%;">Rita Muller</span>
<span class="t" style="left:649.20px;top:267.00px;font-size:7px;line-height:8.40px;color:#1e1e1e;transform:scaleX(0.7065);transform-origin:0 50%;">12K</span>
<div class="b" style="left:599px;top:277.1px;width:43.4px;height:7.3px;background:#3157a8;"></div>
<span class="t" style="left:553.19px;top:277.15px;font-size:7px;line-height:8.40px;color:#1e1e1e;transform:scaleX(0.8431);transform-origin:100% 50%;">Julian Tedder</span>
<span class="t" style="left:646.80px;top:277.15px;font-size:7px;line-height:8.40px;color:#1e1e1e;transform:scaleX(0.7373);transform-origin:0 50%;">11K</span>
<div class="b" style="left:599px;top:287.25px;width:37.1px;height:7.3px;background:#3157a8;"></div>
<span class="t" style="left:550.35px;top:287.30px;font-size:7px;line-height:8.40px;color:#1e1e1e;transform:scaleX(0.8117);transform-origin:100% 50%;">Maria Larsson</span>
<span class="t" style="left:641.00px;top:287.30px;font-size:7px;line-height:8.40px;color:#1e1e1e;transform:scaleX(0.7065);transform-origin:0 50%;">10K</span>
<div class="b" style="left:599px;top:297.4px;width:35.5px;height:7.3px;background:#3157a8;"></div>
<span class="t" style="left:549.55px;top:297.45px;font-size:7px;line-height:8.40px;color:#1e1e1e;transform:scaleX(0.8638);transform-origin:100% 50%;">Yuesha Zhang</span>
<span class="t" style="left:639.00px;top:297.45px;font-size:7px;line-height:8.40px;color:#1e1e1e;transform:scaleX(0.7241);transform-origin:0 50%;">9K</span>
<div class="b" style="left:599px;top:307.55px;width:33.9px;height:7.3px;background:#3157a8;"></div>
<span class="t" style="left:552.68px;top:307.60px;font-size:7px;line-height:8.40px;color:#1e1e1e;transform:scaleX(0.8568);transform-origin:100% 50%;">Audrey White</span>
<span class="t" style="left:637.50px;top:307.60px;font-size:7px;line-height:8.40px;color:#1e1e1e;transform:scaleX(0.7241);transform-origin:0 50%;">9K</span>
<div class="b" style="left:599px;top:317.7px;width:31.7px;height:7.3px;background:#3157a8;"></div>
<span class="t" style="left:541.77px;top:317.75px;font-size:7px;line-height:8.40px;color:#1e1e1e;transform:scaleX(0.8690);transform-origin:100% 50%;">Jonathan Coppin</span>
<span class="t" style="left:635.00px;top:317.75px;font-size:7px;line-height:8.40px;color:#1e1e1e;transform:scaleX(0.7241);transform-origin:0 50%;">8K</span>
<div class="b" style="left:599px;top:327.85px;width:29.5px;height:7.3px;background:#3157a8;"></div>
<span class="t" style="left:547.63px;top:327.90px;font-size:7px;line-height:8.40px;color:#1e1e1e;transform:scaleX(0.8817);transform-origin:100% 50%;">Christie Barlow</span>
<span class="t" style="left:633.00px;top:327.90px;font-size:7px;line-height:8.40px;color:#1e1e1e;transform:scaleX(0.7241);transform-origin:0 50%;">8K</span>
<div class="b" style="left:599px;top:338.0px;width:29.2px;height:7.3px;background:#3157a8;"></div>
<span class="t" style="left:544.12px;top:338.05px;font-size:7px;line-height:8.40px;color:#1e1e1e;transform:scaleX(0.8501);transform-origin:100% 50%;">Giovanni Rovelli</span>
<span class="t" style="left:633.00px;top:338.05px;font-size:7px;line-height:8.40px;color:#1e1e1e;transform:scaleX(0.7241);transform-origin:0 50%;">8K</span>
<div class="b" style="left:599px;top:348.15px;width:28.1px;height:7.3px;background:#3157a8;"></div>
<span class="t" style="left:556.44px;top:348.20px;font-size:7px;line-height:8.40px;color:#1e1e1e;transform:scaleX(0.8364);transform-origin:100% 50%;">Trudy Shore</span>
<span class="t" style="left:631.80px;top:348.20px;font-size:7px;line-height:8.40px;color:#1e1e1e;transform:scaleX(0.7241);transform-origin:0 50%;">7K</span>
<div class="b" style="left:599px;top:358.3px;width:27px;height:7.3px;background:#3157a8;"></div>
<span class="t" style="left:553.07px;top:358.35px;font-size:7px;line-height:8.40px;color:#1e1e1e;transform:scaleX(0.8528);transform-origin:100% 50%;">Cyndy Bloom</span>
<span class="t" style="left:630.40px;top:358.35px;font-size:7px;line-height:8.40px;color:#1e1e1e;transform:scaleX(0.7241);transform-origin:0 50%;">7K</span>
<div class="b" style="left:599px;top:368.45px;width:24.9px;height:7.3px;background:#3157a8;"></div>
<span class="t" style="left:554.24px;top:368.50px;font-size:7px;line-height:8.40px;color:#1e1e1e;transform:scaleX(0.8403);transform-origin:100% 50%;">Michael Hole</span>
<span class="t" style="left:628.20px;top:368.50px;font-size:7px;line-height:8.40px;color:#1e1e1e;transform:scaleX(0.7241);transform-origin:0 50%;">7K</span>
<div class="b" style="left:599px;top:378.6px;width:21.9px;height:7.3px;background:#3157a8;"></div>
<span class="t" style="left:545.29px;top:378.65px;font-size:7px;line-height:8.40px;color:#1e1e1e;transform:scaleX(0.8197);transform-origin:100% 50%;">Jason Michalski</span>
<span class="t" style="left:625.20px;top:378.65px;font-size:7px;line-height:8.40px;color:#1e1e1e;transform:scaleX(0.7241);transform-origin:0 50%;">6K</span>
<div class="b" style="left:599px;top:388.75px;width:21.6px;height:7.3px;background:#3157a8;"></div>
<span class="t" style="left:552.30px;top:388.80px;font-size:7px;line-height:8.40px;color:#1e1e1e;transform:scaleX(0.7900);transform-origin:100% 50%;">Simon James</span>
<span class="t" style="left:625.20px;top:388.80px;font-size:7px;line-height:8.40px;color:#1e1e1e;transform:scaleX(0.7241);transform-origin:0 50%;">6K</span>
<div class="b" style="left:599px;top:398.9px;width:21.3px;height:7.3px;background:#3157a8;"></div>
<span class="t" style="left:536.72px;top:398.95px;font-size:7px;line-height:8.40px;color:#1e1e1e;transform:scaleX(0.8365);transform-origin:100% 50%;">Elizabeth Kendrick</span>
<span class="t" style="left:624.00px;top:398.95px;font-size:7px;line-height:8.40px;color:#1e1e1e;transform:scaleX(0.7241);transform-origin:0 50%;">6K</span>
<div class="b" style="left:599px;top:409.05px;width:20.5px;height:7.3px;background:#3157a8;"></div>
<span class="t" style="left:551.36px;top:409.10px;font-size:7px;line-height:8.40px;color:#1e1e1e;transform:scaleX(0.8422);transform-origin:100% 50%;">Xiaohan Yang</span>
<span class="t" style="left:623.60px;top:409.10px;font-size:7px;line-height:8.40px;color:#1e1e1e;transform:scaleX(0.7241);transform-origin:0 50%;">6K</span>
<div class="b" style="left:599px;top:419.2px;width:19.7px;height:7.3px;background:#3157a8;"></div>
<span class="t" style="left:558.52px;top:419.25px;font-size:7px;line-height:8.40px;color:#1e1e1e;transform:scaleX(0.8015);transform-origin:100% 50%;">Alex Freuer</span>
<span class="t" style="left:623.00px;top:419.25px;font-size:7px;line-height:8.40px;color:#1e1e1e;transform:scaleX(0.7241);transform-origin:0 50%;">5K</span>
<div class="b" style="left:599px;top:429.35px;width:19.7px;height:7.3px;background:#3157a8;"></div>
<span class="t" style="left:534.77px;top:429.40px;font-size:7px;line-height:8.40px;color:#1e1e1e;transform:scaleX(0.8427);transform-origin:100% 50%;">Bernadette Olusola</span>
<span class="t" style="left:623.00px;top:429.40px;font-size:7px;line-height:8.40px;color:#1e1e1e;transform:scaleX(0.7241);transform-origin:0 50%;">5K</span>
<div class="b" style="left:599px;top:439.5px;width:18.9px;height:7.3px;background:#3157a8;"></div>
<span class="t" style="left:562.80px;top:439.55px;font-size:7px;line-height:8.40px;color:#1e1e1e;transform:scaleX(0.8464);transform-origin:100% 50%;">Gina Croft</span>
<span class="t" style="left:622.20px;top:439.55px;font-size:7px;line-height:8.40px;color:#1e1e1e;transform:scaleX(0.7241);transform-origin:0 50%;">5K</span>
<div class="b" style="left:599px;top:449.65px;width:18.6px;height:7.3px;background:#3157a8;"></div>
<span class="t" style="left:544.50px;top:449.70px;font-size:7px;line-height:8.40px;color:#1e1e1e;transform:scaleX(0.8367);transform-origin:100% 50%;">Rhianna Darling</span>
<span class="t" style="left:621.70px;top:449.70px;font-size:7px;line-height:8.40px;color:#1e1e1e;transform:scaleX(0.7241);transform-origin:0 50%;">5K</span>
<span class="t" style="left:594.72px;top:462.10px;font-size:7px;line-height:8.40px;color:#2a2a2a;transform:scaleX(0.7007);transform-origin:50% 50%;">0K</span>
<span class="t" style="left:631.27px;top:462.10px;font-size:7px;line-height:8.40px;color:#2a2a2a;transform:scaleX(0.7065);transform-origin:50% 50%;">10K</span>
<span class="t" style="left:598.71px;top:470.20px;font-size:7.5px;line-height:9.00px;color:#252423;font-weight:bold;transform:scaleX(0.8872);transform-origin:50% 50%;">Sum of Units Sold</span>
<span class="t" style="left:514.77px;top:341.50px;font-size:7.5px;line-height:9px;font-weight:bold;color:#252423;transform:rotate(-90deg) scaleX(0.865);transform-origin:50% 50%;">Sales Rep</span>
<div class="b" style="left:669.5px;top:233px;width:3px;height:226px;background:#ececec;border-radius:1.5px;"></div>
<div class="b" style="left:669.5px;top:233px;width:3px;height:151px;background:#a6a6a6;border-radius:1.5px;"></div>
<svg class="b" style="left:530px;top:120px;" width="100" height="100" viewBox="0 0 100 100"><path d="M49.00 25.80 A26.2 26.2 0 0 1 66.67 71.35 L59.25 63.22 A15.2 15.2 0 0 0 49.00 36.80Z" fill="#3aa893"/><path d="M66.67 71.35 A26.2 26.2 0 0 1 22.82 50.86 L33.81 51.34 A15.2 15.2 0 0 0 59.25 63.22Z" fill="#3157a8"/><path d="M22.82 50.86 A26.2 26.2 0 0 1 49.00 25.80 L49.00 36.80 A15.2 15.2 0 0 0 33.81 51.34Z" fill="#8e3a97"/><path d="M33 24.6 h5 l1 1.8" stroke="#e6b9c4" fill="none" stroke-width="0.8"/><path d="M72 27.6 l-4 0.8 l-2.4 1" stroke="#e6b9c4" fill="none" stroke-width="0.8"/><path d="M54 81.6 h6" stroke="#b9c2d8" fill="none" stroke-width="0.8"/></svg>
<span class="t" style="left:546.74px;top:137.60px;font-size:7px;line-height:8.40px;color:#2a2a2a;transform:scaleX(0.6744);transform-origin:100% 50%;">52K</span>
<span class="t" style="left:531.80px;top:144.40px;font-size:7px;line-height:8.40px;color:#2a2a2a;transform:scaleX(0.7464);transform-origin:100% 50%;">(24.31%)</span>
<span class="t" style="left:604.00px;top:140.00px;font-size:7px;line-height:8.40px;color:#2a2a2a;transform:scaleX(0.6744);transform-origin:0 50%;">82K</span>
<span class="t" style="left:604.00px;top:147.00px;font-size:7px;line-height:8.40px;color:#2a2a2a;transform:scaleX(0.7393);transform-origin:0 50%;">(38.23%)</span>
<span class="t" style="left:591.00px;top:197.80px;font-size:7px;line-height:8.40px;color:#2a2a2a;transform:scaleX(0.7955);transform-origin:0 50%;">81K (37...)</span>
<span class="t" style="left:628.50px;top:149.30px;font-size:8.5px;line-height:10.20px;color:#2a2a2a;transform:scaleX(0.8408);transform-origin:0 50%;">Category</span>
<div class="b" style="left:629.6px;top:162.2px;width:4.8px;height:4.8px;background:#3aa893;border-radius:50%;"></div>
<span class="t" style="left:636.00px;top:159.50px;font-size:8.5px;line-height:10.20px;color:#2a2a2a;transform:scaleX(0.7587);transform-origin:0 50%;">Food</span>
<div class="b" style="left:629.6px;top:174.7px;width:4.8px;height:4.8px;background:#3157a8;border-radius:50%;"></div>
<span class="t" style="left:636.00px;top:172.00px;font-size:8.5px;line-height:10.20px;color:#2a2a2a;transform:scaleX(0.7259);transform-origin:0 50%;">Beverages</span>
<div class="b" style="left:629.6px;top:187.2px;width:4.8px;height:4.8px;background:#8e3a97;border-radius:50%;"></div>
<span class="t" style="left:636.00px;top:184.50px;font-size:8.5px;line-height:10.20px;color:#2a2a2a;transform:scaleX(0.7385);transform-origin:0 50%;">Cakes &amp; ...</span>
<svg class="b" style="left:696px;top:134.5px;" width="7" height="7" viewBox="0 0 7 7"><path d="M5.6 0.8 L1.8 3.5 L5.6 6.2" fill="none" stroke="#1a1a1a" stroke-width="1.7"/></svg>
<svg class="b" style="left:694px;top:154px;transform:rotate(90deg);" width="10" height="10" viewBox="0 0 10 10"><path d="M1 2.5 h8 M2.5 5 h5 M4 7.5 h2" stroke="#222" stroke-width="1.1"/></svg>
<span class="t" style="left:680.24px;top:179.00px;font-size:12.5px;line-height:14px;font-weight:bold;color:#1a1a1a;transform:rotate(90deg) scaleX(0.866);transform-origin:50% 50%;">Filters</span>
<div class="b" style="left:30px;top:489px;width:681px;height:24px;background:#232323;"></div>
<div class="b" style="left:124px;top:489px;width:55px;height:24px;background:#202020;"></div>
<div class="b" style="left:124px;top:511px;width:55px;height:2px;background:#1fb49c;"></div>
<svg class="b" style="left:40px;top:494px;" width="13" height="12" viewBox="0 0 13 12"><rect x="0.6" y="0.6" width="11.8" height="8.8" fill="#3a3a3a" stroke="#eee" stroke-width="1.1"/><path d="M3.5 11 H9.5" stroke="#eee" stroke-width="1.1"/></svg>
<div class="b" style="left:38px;top:509px;width:18px;height:2px;background:#1fb49c;border-radius:1px;"></div>
<svg class="b" style="left:74.5px;top:492.5px;" width="9" height="15" viewBox="0 0 9 15"><rect x="0.6" y="0.6" width="7.8" height="13.4" rx="1.4" fill="#3a3a3a" stroke="#eee" stroke-width="1.1"/><path d="M3.2 11.8 H5.8" stroke="#eee" stroke-width="1"/></svg>
<svg class="b" style="left:98px;top:497px;" width="6" height="8" viewBox="0 0 6 8"><path d="M5 0.8 L1 4 L5 7.2Z" fill="none" stroke="#ddd" stroke-width="0.9"/></svg>
<svg class="b" style="left:113px;top:497px;" width="6" height="8" viewBox="0 0 6 8"><path d="M1 0.8 L5 4 L1 7.2Z" fill="none" stroke="#ddd" stroke-width="0.9"/></svg>
<span class="t" style="left:135.15px;top:496.00px;font-size:10px;line-height:12.00px;color:#fafafa;transform:scaleX(0.8045);transform-origin:50% 50%;-webkit-text-stroke:0.2px #fafafa;">Page 1</span>
<span class="t" style="left:190.70px;top:496.00px;font-size:10px;line-height:12.00px;color:#fafafa;transform:scaleX(0.8045);transform-origin:50% 50%;-webkit-text-stroke:0.2px #fafafa;">Page 2</span>
<div class="b" style="left:179.6px;top:490px;width:1px;height:23px;background:#141414;"></div>
<span class="t" style="left:246.25px;top:496.00px;font-size:10px;line-height:12.00px;color:#fafafa;transform:scaleX(0.8045);transform-origin:50% 50%;-webkit-text-stroke:0.2px #fafafa;">Page 3</span>
<div class="b" style="left:235.1px;top:490px;width:1px;height:23px;background:#141414;"></div>
<span class="t" style="left:301.80px;top:496.00px;font-size:10px;line-height:12.00px;color:#fafafa;transform:scaleX(0.8045);transform-origin:50% 50%;-webkit-text-stroke:0.2px #fafafa;">Page 4</span>
<div class="b" style="left:290.6px;top:490px;width:1px;height:23px;background:#141414;"></div>
<span class="t" style="left:357.35px;top:496.00px;font-size:10px;line-height:12.00px;color:#fafafa;transform:scaleX(0.8045);transform-origin:50% 50%;-webkit-text-stroke:0.2px #fafafa;">Page 5</span>
<div class="b" style="left:346.2px;top:490px;width:1px;height:23px;background:#141414;"></div>
<span class="t" style="left:412.90px;top:496.00px;font-size:10px;line-height:12.00px;color:#fafafa;transform:scaleX(0.8045);transform-origin:50% 50%;-webkit-text-stroke:0.2px #fafafa;">Page 6</span>
<div class="b" style="left:401.8px;top:490px;width:1px;height:23px;background:#141414;"></div>
<div class="b" style="left:123px;top:490px;width:1px;height:23px;background:#141414;"></div>
<svg class="b" style="left:171px;top:492px;" width="5" height="5" viewBox="0 0 5 5"><path d="M0.5 0.5 L4.5 4.5 M4.5 0.5 L0.5 4.5" stroke="#fff" stroke-width="1.3"/></svg>
<div class="b" style="left:457px;top:489px;width:28px;height:24px;background:#27a58c;"></div>
<svg class="b" style="left:466.5px;top:496.5px;" width="9" height="9" viewBox="0 0 9 9"><path d="M4.5 0.5 V8.5 M0.5 4.5 H8.5" stroke="#111" stroke-width="1.8"/></svg>
<div class="b" style="left:711px;top:124px;width:289px;height:389px;background:#0e0e0e;"></div>
<div class="b" style="left:712px;top:124px;width:130px;height:389px;background:#151515;"></div>
<div class="b" style="left:843px;top:124px;width:1px;height:389px;background:#6e6e6e;"></div>
<div class="b" style="left:844px;top:124px;width:132px;height:389px;background:#151515;"></div>
<div class="b" style="left:976px;top:124px;width:24px;height:389px;background:#2b2b2b;"></div>
<span class="t" style="left:718.00px;top:131.98px;font-size:11.7px;line-height:14.04px;color:#fff;font-weight:bold;transform:scaleX(0.8993);transform-origin:0 50%;">Build</span>
<div class="b" style="left:813.5px;top:137px;width:1.6px;height:1.6px;background:#ddd;border-radius:50%;"></div>
<div class="b" style="left:816.5px;top:137px;width:1.6px;height:1.6px;background:#ddd;border-radius:50%;"></div>
<div class="b" style="left:819.5px;top:137px;width:1.6px;height:1.6px;background:#ddd;border-radius:50%;"></div>
<svg class="b" style="left:830.3px;top:134.5px;" width="6" height="7" viewBox="0 0 6 7"><path d="M0.7 0.7 L2.9 3.3 L0.7 5.9 M3 0.7 L5.2 3.3 L3 5.9" fill="none" stroke="#eee" stroke-width="1"/></svg>
<span class="t" style="left:718.00px;top:151.80px;font-size:9.5px;line-height:11.40px;color:#f0f0f0;-webkit-text-stroke:0.22px #f0f0f0;transform:scaleX(0.8797);transform-origin:0 50%;">Suggestions</span>
<div class="b" style="left:717px;top:165px;width:121px;height:157px;background:#050505;border:1px solid #8a8a8a;border-radius:2px;"></div>
<svg class="b" style="left:722.8px;top:170.2px;" width="14" height="14" viewBox="0 0 14 14"><path d="M1.5 1 V12.5 H13.5" stroke="#f6f6f6" fill="none" stroke-width="1.25"/><rect x="2" y="2.2" width="3.5" height="3" fill="none" stroke="#f6f6f6" stroke-width="1.00"/><rect x="5.5" y="2.2" width="4" height="3" fill="#2b88d8"/><rect x="2" y="7.3" width="6" height="3" fill="#9a9a9a"/><rect x="8" y="7.3" width="4" height="3" fill="none" stroke="#f6f6f6" stroke-width="1.00"/></svg>
<svg class="b" style="left:741.78px;top:170.2px;" width="14" height="14" viewBox="0 0 14 14"><path d="M1.5 1 V12.5 H13.5" stroke="#f6f6f6" fill="none" stroke-width="1.25"/><rect x="3.8" y="2" width="3" height="4" fill="none" stroke="#f6f6f6" stroke-width="1.00"/><rect x="3.8" y="6" width="3" height="6.5" fill="#2b88d8"/><rect x="8.8" y="3" width="3" height="9.5" fill="none" stroke="#f6f6f6" stroke-width="1.00"/><rect x="8.8" y="7" width="3" height="5.5" fill="#9a9a9a"/></svg>
<svg class="b" style="left:760.76px;top:170.2px;" width="14" height="14" viewBox="0 0 14 14"><path d="M1.5 1 V12.5 H13.5" stroke="#f6f6f6" fill="none" stroke-width="1.25"/><rect x="2" y="1.8" width="9.5" height="2.6" fill="#2b88d8"/><rect x="2" y="5.2" width="6" height="2.6" fill="#9a9a9a"/><rect x="2" y="8.8" width="9" height="2.8" fill="none" stroke="#f6f6f6" stroke-width="1.00"/></svg>
<svg class="b" style="left:779.74px;top:170.2px;" width="14" height="14" viewBox="0 0 14 14"><path d="M1.5 1 V12.5 H13.5" stroke="#f6f6f6" fill="none" stroke-width="1.25"/><rect x="2.8" y="2" width="3" height="10.5" fill="#2b88d8"/><rect x="6.6" y="6.5" width="2.4" height="6" fill="#9a9a9a"/><rect x="10" y="4" width="2.6" height="8.5" fill="none" stroke="#f6f6f6" stroke-width="1.00"/></svg>
<svg class="b" style="left:798.72px;top:170.2px;" width="14" height="14" viewBox="0 0 14 14"><path d="M1.5 1 V12.5 H13.5" stroke="#f6f6f6" fill="none" stroke-width="1.25"/><rect x="2" y="2.2" width="6" height="3" fill="none" stroke="#f6f6f6" stroke-width="1.00"/><rect x="8" y="2.2" width="5" height="3" fill="#2b88d8"/><rect x="2" y="7.3" width="7" height="3" fill="#9a9a9a"/><rect x="9" y="7.3" width="4" height="3" fill="none" stroke="#f6f6f6" stroke-width="1.00"/></svg>
<svg class="b" style="left:817.7px;top:170.2px;" width="14" height="14" viewBox="0 0 14 14"><path d="M1.5 1 V12.5 H13.5" stroke="#f6f6f6" fill="none" stroke-width="1.25"/><rect x="3.8" y="1.5" width="3" height="3" fill="none" stroke="#f6f6f6" stroke-width="1.00"/><rect x="3.8" y="4.5" width="3" height="8" fill="#2b88d8"/><rect x="8.8" y="1.5" width="3" height="11" fill="none" stroke="#f6f6f6" stroke-width="1.00"/><rect x="8.8" y="6" width="3" height="6.5" fill="#9a9a9a"/></svg>
<svg class="b" style="left:722.8px;top:189.25px;" width="14" height="14" viewBox="0 0 14 14"><path d="M1.5 1 V12.5 H13.5" stroke="#f6f6f6" fill="none" stroke-width="1.25"/><path d="M2 10 L5 6 L7.5 8 L12.5 3" fill="none" stroke="#f6f6f6" stroke-width="1.12" /><path d="M2 8 L6 4.2 L8.5 7 L12.5 5" fill="none" stroke="#2b88d8" stroke-width="1.12" /></svg>
<svg class="b" style="left:741.78px;top:189.25px;" width="14" height="14" viewBox="0 0 14 14"><path d="M1.5 12.5 L6 4.5 L8.5 9 L10.5 6 L13 12.5Z" fill="#2b88d8" /><path d="M1 12.8 L6 3.2 L8 7 L10.5 2.5 L13.5 12.8Z" fill="none" stroke="#f6f6f6" stroke-width="1.00" /><path d="M9.3 5 L10.5 2.8 L13 11.5 L10.5 6.5Z" fill="#9a9a9a" /></svg>
<svg class="b" style="left:760.76px;top:189.25px;" width="14" height="14" viewBox="0 0 14 14"><path d="M1.5 1 V12.5 H13.5" stroke="#f6f6f6" fill="none" stroke-width="1.25"/><path d="M2 3 L5.5 8 L8.5 4 L12.8 8 V11 L8.5 7.2 L5.5 11 L2 6.5Z" fill="#2b88d8" /><path d="M2 3 L5.5 8 L8.5 4 L12.8 8" fill="none" stroke="#f6f6f6" stroke-width="0.88" /></svg>
<svg class="b" style="left:779.74px;top:189.25px;" width="14" height="14" viewBox="0 0 14 14"><path d="M1.5 1 V12.5 H13.5" stroke="#f6f6f6" fill="none" stroke-width="1.25"/><path d="M2 2 H13 V8 L10 5.2 L6 9.2 L2 6Z" fill="#2b88d8" /><path d="M2 6 L6 9.2 L10 5.2 L13 8" fill="none" stroke="#f6f6f6" stroke-width="0.88" /><path d="M2 2 H13" fill="none" stroke="#f6f6f6" stroke-width="0.88" /></svg>
<svg class="b" style="left:798.72px;top:189.25px;" width="14" height="14" viewBox="0 0 14 14"><path d="M1.5 1 V12.5 H13.5" stroke="#f6f6f6" fill="none" stroke-width="1.25"/><rect x="3.5" y="4" width="2.6" height="8.5" fill="#2b88d8"/><rect x="3.5" y="2.5" width="2.6" height="2" fill="none" stroke="#f6f6f6" stroke-width="0.75"/><rect x="8.6" y="5" width="2.6" height="7.5" fill="#2b88d8"/><rect x="8.6" y="2.5" width="2.6" height="2.5" fill="#9a9a9a"/><path d="M2 10 L5 7.5 L8 9 L12.5 4.5" fill="none" stroke="#f6f6f6" stroke-width="1.00" /></svg>
<svg class="b" style="left:817.7px;top:189.25px;" width="14" height="14" viewBox="0 0 14 14"><path d="M1.5 1 V12.5 H13.5" stroke="#f6f6f6" fill="none" stroke-width="1.25"/><rect x="3" y="7" width="2.2" height="5.5" fill="#2b88d8"/><rect x="5.6" y="3" width="2.2" height="9.5" fill="#2b88d8"/><rect x="9" y="5" width="2.2" height="7.5" fill="#9a9a9a"/><rect x="11.2" y="7" width="1.6" height="5.5" fill="none" stroke="#f6f6f6" stroke-width="0.75"/><path d="M2 9.5 L5 7 L8 8.5 L12.5 4" fill="none" stroke="#f6f6f6" stroke-width="1.00" /></svg>
<svg class="b" style="left:722.8px;top:208.3px;" width="14" height="14" viewBox="0 0 14 14"><path d="M1.5 1 V12.5 H13.5" stroke="#f6f6f6" fill="none" stroke-width="1.25"/><path d="M2 3 C5 3 6 8 9 7 S12 3 13 3 V7 C11 7 10 10 8 10 S5 6 2 7Z" fill="#2b88d8" /><path d="M2 8 C5 8 6 11.5 9 11 S12 8.5 13 8.5 V11.5 H2Z" fill="#f5a623" /><path d="M2 3 C5 3 6 8 9 7 S12 3 13 3" fill="none" stroke="#f6f6f6" stroke-width="0.88" /></svg>
<svg class="b" style="left:741.78px;top:208.3px;" width="14" height="14" viewBox="0 0 14 14"><path d="M1.5 1 V12.5 H13.5" stroke="#f6f6f6" fill="none" stroke-width="1.25"/><path d="M3 12.5 V3 H5.5 V7 H8 V2.5 H10.5 V12.5" fill="none" stroke="#f6f6f6" stroke-width="1.12" /><path d="M5.5 7 V12.5 M8 7 V12.5" fill="none" stroke="#f6f6f6" stroke-width="1.00" /></svg>
<svg class="b" style="left:760.76px;top:208.3px;" width="14" height="14" viewBox="0 0 14 14"><rect x="0.8" y="1.5" width="12.4" height="3.2" fill="#2b88d8"/><rect x="3" y="5.7" width="8" height="3.2" fill="#2b88d8"/><rect x="4.8" y="9.9" width="4.4" height="3.2" fill="#2b88d8"/></svg>
<svg class="b" style="left:779.74px;top:208.3px;" width="14" height="14" viewBox="0 0 14 14"><path d="M1.5 1 V12.5 H13.5" stroke="#f6f6f6" fill="none" stroke-width="1.25"/><rect x="4" y="4" width="1.8" height="1.8" fill="#2b88d8"/><rect x="7" y="6" width="1.8" height="1.8" fill="#2b88d8"/><rect x="10.5" y="9" width="1.8" height="1.8" fill="#2b88d8"/><rect x="4" y="9.5" width="1.8" height="1.8" fill="#f6f6f6"/><rect x="10.5" y="2.5" width="1.8" height="1.8" fill="#f6f6f6"/><rect x="7.5" y="2.2" width="1.4" height="1.4" fill="#2b88d8"/></svg>
<svg class="b" style="left:798.72px;top:208.3px;" width="14" height="14" viewBox="0 0 14 14"><circle cx="7" cy="7" r="5.8" fill="none" stroke="#f2f2f2" stroke-width="0.9"/><path d="M7 7 V1.2 A5.8 5.8 0 0 1 12 10Z" fill="#2b88d8" /><path d="M7 1.2 V7 L12 10" fill="none" stroke="#f6f6f6" stroke-width="1.00" /></svg>
<svg class="b" style="left:817.7px;top:208.3px;" width="14" height="14" viewBox="0 0 14 14"><circle cx="7" cy="7" r="4.6" fill="none" stroke="#2b88d8" stroke-width="2.6"/><path d="M7 1 A6 6 0 0 1 12.6 5" fill="none" stroke="#f6f6f6" stroke-width="1.12" /><path d="M1.6 4.5 A6 6 0 0 1 5 1.4" fill="none" stroke="#f6f6f6" stroke-width="1.00" /></svg>
<svg class="b" style="left:722.8px;top:227.35px;" width="14" height="14" viewBox="0 0 14 14"><rect x="1" y="1" width="6" height="6" fill="#2b88d8"/><rect x="1" y="7.8" width="6" height="5.2" fill="#2b88d8"/><rect x="7.8" y="1" width="5.2" height="4" fill="none" stroke="#f6f6f6" stroke-width="1.00"/><rect x="7.8" y="5.8" width="5.2" height="7.2" fill="none" stroke="#f6f6f6" stroke-width="1.00"/><rect x="8.6" y="6.6" width="3.6" height="2.6" fill="#9a9a9a"/></svg>
<svg class="b" style="left:741.78px;top:227.35px;" width="14" height="14" viewBox="0 0 14 14"><circle cx="7" cy="6" r="4.6" fill="none" stroke="#f2f2f2" stroke-width="0.9"/><path d="M5 3.5 C6 2.5 8 3 7.5 4.5 S5.5 6 5 5Z M7.5 6.5 C9 6 10 7 9.5 8.5 S7.5 9 7.5 7.5Z" fill="#3fbf6f" /><path d="M2.5 2.5 C0 6 2 11.5 7 11.8 M7 11.8 V13 M4 13.3 H10" fill="none" stroke="#f6f6f6" stroke-width="1.00" /></svg>
<svg class="b" style="left:760.76px;top:227.35px;" width="14" height="14" viewBox="0 0 14 14"><path d="M1.5 3 L5 2 L7 3.5 L10 2 L12.8 3.2 L12.5 7 L10.5 10.5 L8 12.5 L5.5 11 L3 11.5 L1.5 7.5Z" fill="#9a9a9a" /><path d="M1.5 3 L5 2 L7 3.5 L6.5 7.5 L3 8 L1.5 7.5Z M8 12.5 L10.5 10.5 L12.5 7 L9 7.5 L7.5 10Z" fill="#2b88d8" /><path d="M1.5 3 L5 2 L7 3.5 L10 2 L12.8 3.2 L12.5 7 L10.5 10.5 L8 12.5 L5.5 11 L3 11.5 L1.5 7.5Z" fill="none" stroke="#f6f6f6" stroke-width="0.88" /></svg>
<svg class="b" style="left:779.74px;top:227.35px;" width="14" height="14" viewBox="0 0 14 14"><path d="M1.5 3 L5 2 L7 3.5 L10 2 L12.8 3.2 L12.5 7 L10.5 10.5 L8 12.5 L5.5 11 L3 11.5 L1.5 7.5Z" fill="none" stroke="#f6f6f6" stroke-width="1.00" /><path d="M7 3.5 L6.5 7.5 L3 8 M6.5 7.5 L9 7.5 L12.5 7 M9 7.5 L7.5 10 L8 12.5" fill="none" stroke="#2b88d8" stroke-width="1.00" /></svg>
<svg class="b" style="left:798.72px;top:227.35px;" width="14" height="14" viewBox="0 0 14 14"><path d="M7.5 0.8 L12.5 13 L7.5 9.8 L2 13Z" fill="#2b88d8" /><path d="M7.5 0.8 L7.5 9.8 L2 13Z" fill="#4aa3ea" /></svg>
<svg class="b" style="left:817.7px;top:227.35px;" width="14" height="14" viewBox="0 0 14 14"><path d="M1.5 10.5 A5.7 5.7 0 0 1 12.5 10.5" fill="none" stroke="#f6f6f6" stroke-width="1.12" /><path d="M3.8 10.5 A3.4 3.4 0 0 1 10.2 10.5" fill="none" stroke="#f6f6f6" stroke-width="1.00" /><path d="M2.8 6.5 A6 6 0 0 1 9.5 5 L8.6 7.4 A3.4 3.4 0 0 0 4.8 8.2Z" fill="#2b88d8" /><path d="M1.5 10.5 H3.8 M10.2 10.5 H12.5" fill="none" stroke="#f6f6f6" stroke-width="1.00" /></svg>
<svg class="b" style="left:722.8px;top:246.4px;" width="14" height="14" viewBox="0 0 14 14"><rect x="1" y="2.5" width="12" height="8.5" fill="none" stroke="#f6f6f6" stroke-width="1.12"/><text x="7" y="8.6" font-size="5.2" text-anchor="middle" fill="#2b88d8" font-family="Liberation Sans" font-weight="bold">123</text><path d="M2.5 9.8 H11.5" fill="none" stroke="#9a9a9a" stroke-width="0.75" /></svg>
<svg class="b" style="left:741.78px;top:246.4px;" width="14" height="14" viewBox="0 0 14 14"><rect x="1.2" y="1.5" width="11.6" height="11" fill="none" stroke="#f6f6f6" stroke-width="1.12"/><path d="M3.2 4.2 H10.5 M3.2 9.2 H10.5" fill="none" stroke="#f6f6f6" stroke-width="1.12" /><path d="M3.2 6.7 H8" fill="none" stroke="#2b88d8" stroke-width="1.12" /><path d="M3.2 11 H7" fill="none" stroke="#9a9a9a" stroke-width="0.75" /></svg>
<svg class="b" style="left:760.76px;top:246.4px;" width="14" height="14" viewBox="0 0 14 14"><rect x="1" y="2.5" width="12" height="8.5" fill="none" stroke="#f6f6f6" stroke-width="1.12"/><path d="M3 7.5 L5 4.2 L7 7.5Z" fill="#2ea84f" /><path d="M7.6 4.4 L11.2 4.4 L9.4 7.6Z" fill="#e0393e" /><path d="M2.8 9.3 H11.2" fill="none" stroke="#9a9a9a" stroke-width="0.88" /></svg>
<svg class="b" style="left:779.74px;top:246.4px;" width="14" height="14" viewBox="0 0 14 14"><rect x="1.2" y="1.5" width="10.5" height="10.5" fill="none" stroke="#f6f6f6" stroke-width="1.00"/><path d="M1.2 3.6 H11.7" fill="none" stroke="#f6f6f6" stroke-width="0.88" /><rect x="3" y="5.3" width="2.2" height="1.6" fill="#f6f6f6"/><rect x="3" y="8.3" width="2.2" height="1.6" fill="#f6f6f6"/><path d="M7.2 6 H13.6 L11.3 8.8 V12.6 L9.5 11.6 V8.8Z" fill="#111" stroke="#f6f6f6" stroke-width="1.00" /></svg>
<svg class="b" style="left:798.72px;top:246.4px;" width="14" height="14" viewBox="0 0 14 14"><rect x="1.2" y="2" width="11.6" height="10.5" fill="none" stroke="#f6f6f6" stroke-width="1.00"/><path d="M1.2 3.8 H12.8 M1.2 6.8 H12.8 M1.2 9.7 H12.8 M5.1 2 V12.5 M9 2 V12.5" fill="none" stroke="#f6f6f6" stroke-width="0.88" /></svg>
<svg class="b" style="left:817.7px;top:246.4px;" width="14" height="14" viewBox="0 0 14 14"><rect x="5.1" y="6.8" width="7.7" height="5.7" fill="#2b88d8"/><rect x="1.2" y="2" width="11.6" height="10.5" fill="none" stroke="#f6f6f6" stroke-width="1.00"/><path d="M1.2 3.8 H12.8 M1.2 6.8 H12.8 M1.2 9.7 H12.8 M5.1 2 V12.5 M9 2 V12.5" fill="none" stroke="#f6f6f6" stroke-width="0.88" /></svg>
<svg class="b" style="left:722.8px;top:265.45px;" width="14" height="14" viewBox="0 0 14 14"><text x="7" y="12" font-size="12.5" text-anchor="middle" fill="#3d9be9" font-family="Liberation Sans" font-weight="bold">R</text></svg>
<svg class="b" style="left:741.78px;top:265.45px;" width="14" height="14" viewBox="0 0 14 14"><text x="7" y="11" font-size="11.5" text-anchor="middle" fill="#3d9be9" font-family="Liberation Sans" font-weight="bold" textLength="14" lengthAdjust="spacingAndGlyphs">Py</text></svg>
<svg class="b" style="left:760.76px;top:265.45px;" width="14" height="14" viewBox="0 0 14 14"><path d="M1.5 1 V12.5 H13.5" stroke="#f6f6f6" fill="none" stroke-width="1.25"/><path d="M2 3 H11 M2 6 H8 M2 9 H6" fill="none" stroke="#f6f6f6" stroke-width="1.12" /><circle cx="11.5" cy="3" r="1.3" fill="none" stroke="#2b88d8" stroke-width="0.9"/><rect x="5.5" y="8.2" width="1.6" height="1.6" fill="#2b88d8"/></svg>
<svg class="b" style="left:779.74px;top:265.45px;" width="14" height="14" viewBox="0 0 14 14"><rect x="0.8" y="5.6" width="4" height="2.6" fill="#2b88d8"/><path d="M4.8 7 H7 M7 2.5 V11.5 M7 2.5 H8 M7 7 H8 M7 11.5 H8" fill="none" stroke="#f6f6f6" stroke-width="0.88" /><rect x="8" y="1.2" width="5" height="2.6" fill="#2b88d8"/><rect x="8" y="5.6" width="5" height="2.6" fill="#2b88d8"/><rect x="8" y="10" width="5" height="2.6" fill="#2b88d8"/></svg>
<svg class="b" style="left:798.72px;top:265.45px;" width="14" height="14" viewBox="0 0 14 14"><path d="M1.2 1.8 H12.8 V9.5 H6 L3.2 12.5 V9.5 H1.2Z" fill="none" stroke="#f6f6f6" stroke-width="1.12" /><path d="M3.2 12.5 L6 9.5" fill="none" stroke="#2b88d8" stroke-width="1.25" /></svg>
<svg class="b" style="left:817.7px;top:265.45px;" width="14" height="14" viewBox="0 0 14 14"><path d="M2.5 1 H9 L12 4 V13 H2.5Z M9 1 V4 H12" fill="none" stroke="#f6f6f6" stroke-width="1.12" /><path d="M2 5 H5 M4.5 7.5 H9.5 M4.5 9.5 H9.5" fill="none" stroke="#2b88d8" stroke-width="1.12" /><circle cx="2.6" cy="5" r="1" fill="#2b88d8"/></svg>
<svg class="b" style="left:722.8px;top:284.5px;" width="14" height="14" viewBox="0 0 14 14"><path d="M3.5 1.5 H10.5 V5.5 A3.5 3.5 0 0 1 3.5 5.5Z M3.5 2.8 H1.2 V4 A2.4 2.4 0 0 0 3.7 6.3 M10.5 2.8 H12.8 V4 A2.4 2.4 0 0 1 10.3 6.3 M7 9 V11" fill="none" stroke="#f6f6f6" stroke-width="1.12" /><rect x="4.2" y="11" width="5.6" height="1.8" fill="#2b88d8"/></svg>
<svg class="b" style="left:741.78px;top:284.5px;" width="14" height="14" viewBox="0 0 14 14"><path d="M2.5 1 H8.5 L12 4.5 V13 H2.5Z M8.5 1 V4.5 H12" fill="none" stroke="#f6f6f6" stroke-width="1.12" /><rect x="4.5" y="8" width="1.3" height="3.5" fill="#f6f6f6"/><rect x="6.6" y="6.2" width="1.3" height="5.3" fill="#f6f6f6"/><rect x="8.7" y="9" width="1.3" height="2.5" fill="#f6f6f6"/></svg>
<svg class="b" style="left:760.76px;top:284.5px;" width="14" height="14" viewBox="0 0 14 14"><rect x="2.5" y="3.5" width="11" height="8.5" fill="none" stroke="#f6f6f6" stroke-width="1.12"/><text x="8.5" y="9.6" font-size="4.8" text-anchor="middle" fill="#2b88d8" font-family="Liberation Sans" font-weight="bold">123</text><path d="M4 0 L0.5 5.2 H2.8 L1.5 9.5 L6 3.6 H3.5 L5.5 0Z" fill="#f5a623"/></svg>
<svg class="b" style="left:779.74px;top:284.5px;" width="14" height="14" viewBox="0 0 14 14"><rect x="2" y="2" width="5" height="9.5" fill="none" stroke="#f6f6f6" stroke-width="1.00"/><path d="M7 4.5 H13.6 L11.3 7.5 V12.6 L9.5 11.6 V7.5Z" fill="#111" stroke="#f6f6f6" stroke-width="1.00" /><path d="M3 9 H5.5" fill="none" stroke="#2b88d8" stroke-width="1.00" /><path d="M4 0 L0.5 5.2 H2.8 L1.5 9.5 L6 3.6 H3.5 L5.5 0Z" fill="#f5a623"/></svg>
<svg class="b" style="left:798.72px;top:284.5px;" width="14" height="14" viewBox="0 0 14 14"><rect x="2.5" y="2" width="9.5" height="9" fill="none" stroke="#f6f6f6" stroke-width="1.00"/><path d="M7 5.5 H13.6 L11.3 8.3 V12.6 L9.5 11.6 V8.3Z" fill="#111" stroke="#f6f6f6" stroke-width="1.00" /><path d="M5 8 L6.2 5 L7 7" fill="none" stroke="#2b88d8" stroke-width="1.00" /><path d="M4 0 L0.5 5.2 H2.8 L1.5 9.5 L6 3.6 H3.5 L5.5 0Z" fill="#f5a623"/></svg>
<svg class="b" style="left:817.7px;top:284.5px;" width="14" height="14" viewBox="0 0 14 14"><rect x="2.5" y="2" width="9.5" height="9" fill="none" stroke="#f6f6f6" stroke-width="1.00"/><path d="M7 5.5 H13.6 L11.3 8.3 V12.6 L9.5 11.6 V8.3Z" fill="#111" stroke="#f6f6f6" stroke-width="1.00" /><path d="M6 4 H10.5" fill="none" stroke="#f6f6f6" stroke-width="0.88" /><path d="M4 0 L0.5 5.2 H2.8 L1.5 9.5 L6 3.6 H3.5 L5.5 0Z" fill="#f5a623"/></svg>
<svg class="b" style="left:722.8px;top:303.55px;" width="14" height="14" viewBox="0 0 14 14"><rect x="1.5" y="3" width="10.5" height="10" fill="none" stroke="#2b88d8" stroke-width="1.25"/><path d="M4 11 C5 8 8 9.5 9 6.5 L11 4" fill="none" stroke="#2b88d8" stroke-width="1.38" /><path d="M2.2 0.4 A1.9 1.9 0 0 1 4.1 2.3 C4.1 3.6 2.2 5.8 2.2 5.8 C2.2 5.8 0.3 3.6 0.3 2.3 A1.9 1.9 0 0 1 2.2 0.4Z" fill="#f5a623" /><circle cx="12" cy="12" r="1.6" fill="#f5a623"/></svg>
<svg class="b" style="left:741.78px;top:303.55px;" width="14" height="14" viewBox="0 0 14 14"><path d="M7 1.2 L12.8 7 L7 12.8 L1.2 7Z M4.1 4.1 L9.9 9.9 M9.9 4.1 L4.1 9.9" fill="none" stroke="#a33cc2" stroke-width="1.25" /></svg>
<svg class="b" style="left:760.76px;top:303.55px;" width="14" height="14" viewBox="0 0 14 14"><path d="M1.5 2 H7.5 L12.5 7 L7.5 12 H1.5 L6.5 7Z" fill="none" stroke="#2b7bd6" stroke-width="1.25" /><path d="M4.5 12 L9.5 7 L7.5 5" fill="none" stroke="#2b7bd6" stroke-width="1.12" /></svg>
<svg class="b" style="left:779.74px;top:303.55px;" width="14" height="14" viewBox="0 0 14 14"><circle cx="3.5" cy="7.5" r="0.9" fill="#eee"/><circle cx="7" cy="7.5" r="0.9" fill="#eee"/><circle cx="10.5" cy="7.5" r="0.9" fill="#eee"/></svg>
<span class="t" style="left:718.00px;top:327.80px;font-size:9.5px;line-height:11.40px;color:#f0f0f0;-webkit-text-stroke:0.22px #f0f0f0;transform:scaleX(0.8222);transform-origin:0 50%;">Data</span>
<div class="b" style="left:717px;top:341.5px;width:121px;height:29px;border:1px dashed #cfcfcf;"></div>
<div class="b" style="left:721px;top:345.5px;width:113px;height:22px;background:#2a2a2a;border:1px solid #8a8a8a;"></div>
<span class="t" style="left:755.71px;top:350.80px;font-size:9.5px;line-height:11.40px;color:#fff;transform:scaleX(0.9637);transform-origin:50% 50%;">+Add data</span>
<span class="t" style="left:850.00px;top:131.98px;font-size:11.7px;line-height:14.04px;color:#fff;font-weight:bold;transform:scaleX(0.9266);transform-origin:0 50%;">Data</span>
<div class="b" style="left:946px;top:137px;width:1.6px;height:1.6px;background:#ddd;border-radius:50%;"></div>
<div class="b" style="left:949px;top:137px;width:1.6px;height:1.6px;background:#ddd;border-radius:50%;"></div>
<div class="b" style="left:952px;top:137px;width:1.6px;height:1.6px;background:#ddd;border-radius:50%;"></div>
<svg class="b" style="left:963px;top:134.5px;" width="6" height="7" viewBox="0 0 6 7"><path d="M0.7 0.7 L2.9 3.3 L0.7 5.9 M3 0.7 L5.2 3.3 L3 5.9" fill="none" stroke="#eee" stroke-width="1"/></svg>
<div class="b" style="left:847.5px;top:157px;width:125.5px;height:17.7px;background:#2a2a2a;border:1px solid #a8a8a8;border-radius:3px;"></div>
<svg class="b" style="left:855.5px;top:160.5px;" width="11" height="11" viewBox="0 0 11 11"><circle cx="4.4" cy="4.4" r="3.4" fill="none" stroke="#ddd" stroke-width="1"/><path d="M7 7 L10.3 10.3" stroke="#ddd" stroke-width="1.1"/></svg>
<span class="t" style="left:871.80px;top:159.40px;font-size:11px;line-height:13.20px;color:#a6a6a6;transform:scaleX(0.8378);transform-origin:0 50%;">Search</span>
<svg class="b" style="left:855px;top:186.5px;" width="5" height="7" viewBox="0 0 5 7"><path d="M0.8 0.6 L4 3.5 L0.8 6.4" fill="none" stroke="#ddd" stroke-width="0.9"/></svg>
<svg class="b" style="left:865px;top:185.0px;" width="10" height="10" viewBox="0 0 10 10"><rect x="2.4" y="0.6" width="7" height="8.8" rx="0.8" fill="none" stroke="#eee" stroke-width="0.9"/><path d="M2.4 3.2 H9.4 M5 3.2 V9.4 M7.2 3.2 V9.4 M2.4 6.2 H9.4" stroke="#eee" stroke-width="0.7"/><rect x="0.2" y="4.6" width="4" height="5" fill="#1a1a1a" stroke="#eee" stroke-width="0.8"/></svg>
<span class="t" style="left:879.00px;top:184.60px;font-size:9.5px;line-height:11.40px;color:#f2f2f2;-webkit-text-stroke:0.22px #f2f2f2;transform:scaleX(0.8819);transform-origin:0 50%;">Calendar</span>
<svg class="b" style="left:855px;top:204.07px;" width="5" height="7" viewBox="0 0 5 7"><path d="M0.8 0.6 L4 3.5 L0.8 6.4" fill="none" stroke="#ddd" stroke-width="0.9"/></svg>
<svg class="b" style="left:865px;top:202.57px;" width="10" height="10" viewBox="0 0 10 10"><rect x="0.6" y="0.6" width="8.8" height="8.8" rx="1" fill="none" stroke="#eee" stroke-width="0.9"/><path d="M0.6 3.4 H9.4 M0.6 6.4 H9.4 M3.6 0.6 V9.4 M6.5 0.6 V9.4" stroke="#eee" stroke-width="0.7"/></svg>
<span class="t" style="left:879.00px;top:202.17px;font-size:9.5px;line-height:11.40px;color:#f2f2f2;-webkit-text-stroke:0.22px #f2f2f2;transform:scaleX(0.8921);transform-origin:0 50%;">dCategories</span>
<svg class="b" style="left:855px;top:221.64px;" width="5" height="7" viewBox="0 0 5 7"><path d="M0.8 0.6 L4 3.5 L0.8 6.4" fill="none" stroke="#ddd" stroke-width="0.9"/></svg>
<svg class="b" style="left:865px;top:220.14px;" width="10" height="10" viewBox="0 0 10 10"><rect x="0.6" y="0.6" width="8.8" height="8.8" rx="1" fill="none" stroke="#eee" stroke-width="0.9"/><path d="M0.6 3.4 H9.4 M0.6 6.4 H9.4 M3.6 0.6 V9.4 M6.5 0.6 V9.4" stroke="#eee" stroke-width="0.7"/></svg>
<span class="t" style="left:879.00px;top:219.74px;font-size:9.5px;line-height:11.40px;color:#f2f2f2;-webkit-text-stroke:0.22px #f2f2f2;transform:scaleX(0.9118);transform-origin:0 50%;">dProducts</span>
<svg class="b" style="left:855px;top:239.21px;" width="5" height="7" viewBox="0 0 5 7"><path d="M0.8 0.6 L4 3.5 L0.8 6.4" fill="none" stroke="#ddd" stroke-width="0.9"/></svg>
<svg class="b" style="left:865px;top:237.71px;" width="10" height="10" viewBox="0 0 10 10"><rect x="0.6" y="0.6" width="8.8" height="8.8" rx="1" fill="none" stroke="#eee" stroke-width="0.9"/><path d="M0.6 3.4 H9.4 M0.6 6.4 H9.4 M3.6 0.6 V9.4 M6.5 0.6 V9.4" stroke="#eee" stroke-width="0.7"/></svg>
<span class="t" style="left:879.00px;top:237.31px;font-size:9.5px;line-height:11.40px;color:#f2f2f2;-webkit-text-stroke:0.22px #f2f2f2;transform:scaleX(0.8101);transform-origin:0 50%;">dSalesReps</span>
<svg class="b" style="left:855px;top:256.78px;" width="5" height="7" viewBox="0 0 5 7"><path d="M0.8 0.6 L4 3.5 L0.8 6.4" fill="none" stroke="#ddd" stroke-width="0.9"/></svg>
<svg class="b" style="left:865px;top:255.27999999999997px;" width="10" height="10" viewBox="0 0 10 10"><rect x="0.6" y="0.6" width="8.8" height="8.8" rx="1" fill="none" stroke="#eee" stroke-width="0.9"/><path d="M0.6 3.4 H9.4 M0.6 6.4 H9.4 M3.6 0.6 V9.4 M6.5 0.6 V9.4" stroke="#eee" stroke-width="0.7"/></svg>
<span class="t" style="left:879.00px;top:254.88px;font-size:9.5px;line-height:11.40px;color:#f2f2f2;-webkit-text-stroke:0.22px #f2f2f2;transform:scaleX(0.8574);transform-origin:0 50%;">dStore</span>
<svg class="b" style="left:855px;top:274.35px;" width="5" height="7" viewBox="0 0 5 7"><path d="M0.8 0.6 L4 3.5 L0.8 6.4" fill="none" stroke="#ddd" stroke-width="0.9"/></svg>
<svg class="b" style="left:865px;top:272.85px;" width="10" height="10" viewBox="0 0 10 10"><rect x="0.6" y="0.6" width="8.8" height="8.8" rx="1" fill="none" stroke="#eee" stroke-width="0.9"/><path d="M0.6 3.4 H9.4 M0.6 6.4 H9.4 M3.6 0.6 V9.4 M6.5 0.6 V9.4" stroke="#eee" stroke-width="0.7"/></svg>
<span class="t" style="left:879.00px;top:272.45px;font-size:9.5px;line-height:11.40px;color:#f2f2f2;-webkit-text-stroke:0.22px #f2f2f2;transform:scaleX(0.7953);transform-origin:0 50%;">fSales</span>
<svg class="b" style="left:855px;top:291.92px;" width="5" height="7" viewBox="0 0 5 7"><path d="M0.8 0.6 L4 3.5 L0.8 6.4" fill="none" stroke="#ddd" stroke-width="0.9"/></svg>
<svg class="b" style="left:865px;top:290.42px;" width="10" height="10" viewBox="0 0 10 10"><rect x="0.6" y="0.6" width="8.8" height="8.8" rx="1" fill="none" stroke="#eee" stroke-width="0.9"/><path d="M0.6 3.4 H9.4 M0.6 6.4 H9.4 M3.6 0.6 V9.4 M6.5 0.6 V9.4" stroke="#eee" stroke-width="0.7"/></svg>
<span class="t" style="left:879.00px;top:290.02px;font-size:9.5px;line-height:11.40px;color:#f2f2f2;-webkit-text-stroke:0.22px #f2f2f2;transform:scaleX(0.9293);transform-origin:0 50%;">new-products</span>
<svg class="b" style="left:855px;top:309.49px;" width="5" height="7" viewBox="0 0 5 7"><path d="M0.8 0.6 L4 3.5 L0.8 6.4" fill="none" stroke="#ddd" stroke-width="0.9"/></svg>
<svg class="b" style="left:865px;top:307.99px;" width="10" height="10" viewBox="0 0 10 10"><rect x="0.6" y="0.6" width="8.8" height="8.8" rx="1" fill="none" stroke="#eee" stroke-width="0.9"/><path d="M0.6 3.4 H9.4 M0.6 6.4 H9.4 M3.6 0.6 V9.4 M6.5 0.6 V9.4" stroke="#eee" stroke-width="0.7"/></svg>
<span class="t" style="left:879.00px;top:307.59px;font-size:9.5px;line-height:11.40px;color:#f2f2f2;-webkit-text-stroke:0.22px #f2f2f2;transform:scaleX(0.8944);transform-origin:0 50%;">ProductCosts</span>
<div class="b" style="left:977px;top:124px;width:23px;height:22.8px;background:#363636;border:1px solid #585858;border-right:none;border-top:none;"></div>
<div class="b" style="left:977px;top:147.8px;width:23px;height:22px;background:#202020;border:1px solid #5a5a5a;border-right:none;"></div>
<svg class="b" style="left:982.5px;top:128.5px;" width="11" height="14" viewBox="0 0 11 14"><ellipse cx="5.5" cy="3" rx="4.4" ry="2.2" fill="none" stroke="#f2f2f2" stroke-width="1.1"/><path d="M1.1 3 V11 C1.1 13.8 9.9 13.8 9.9 11 V3" fill="none" stroke="#f2f2f2" stroke-width="1.1"/></svg>
<svg class="b" style="left:981px;top:153px;" width="14" height="14" viewBox="0 0 14 14"><path d="M1 12.5 V6.5 H4.2 V12.5Z M4.2 12.5 V1.5 H7.6 V6" fill="none" stroke="#f2f2f2" stroke-width="1.1"/><ellipse cx="10" cy="7" rx="2.8" ry="1.4" fill="none" stroke="#f0a35a" stroke-width="1"/><path d="M7.2 7 V11.6 C7.2 13.4 12.8 13.4 12.8 11.6 V7" fill="none" stroke="#f0a35a" stroke-width="1"/></svg>
<svg class="b" style="left:981px;top:176px;" width="15" height="15" viewBox="0 0 15 15"><path d="M2.5 9.5 V3.5 H5.5 V1 H8.5 V7" fill="none" stroke="#f2f2f2" stroke-width="1.1"/><path d="M13.5 2.5 L8 9 L6.5 8" fill="none" stroke="#f2f2f2" stroke-width="1.1"/><path d="M1.5 13.5 C4 13.8 7.5 12.5 8.2 9.2 L6.3 8 C4.5 9 4.5 12 1.5 13.5Z" fill="#3d9be9"/></svg>
<svg class="b" style="left:981px;top:199.5px;" width="15" height="15" viewBox="0 0 15 15"><path d="M2 2.5 H10.5 V7 M2 2.5 V12 H7.5" fill="none" stroke="#f2f2f2" stroke-width="1"/><path d="M3.5 6.5 A2.6 2.6 0 0 1 8 5 M8.3 7.5 A2.6 2.6 0 0 1 3.8 9" fill="none" stroke="#3fbf6f" stroke-width="1.2"/><path d="M7.5 8.5 H14 L11.8 11 V14 L9.8 13 V11Z" fill="#2b2b2b" stroke="#f2f2f2" stroke-width="0.9"/></svg>
<svg class="b" style="left:981px;top:223.5px;" width="15" height="15" viewBox="0 0 15 15"><rect x="5" y="1" width="8.5" height="8.5" fill="#f39a2b"/><rect x="1" y="6" width="8.5" height="7" fill="#2b2b2b" stroke="#f2f2f2" stroke-width="1"/><path d="M9 7 V14 L10.8 12.3 L12 14.8 L13 14.3 L11.9 11.9 H14Z" fill="#2b2b2b" stroke="#f2f2f2" stroke-width="0.8"/></svg>
<svg class="b" style="left:982px;top:247px;" width="13" height="13" viewBox="0 0 13 13"><path d="M6.5 0.5 V12.5 M0.5 6.5 H12.5" stroke="#f2f2f2" stroke-width="1.1"/></svg>
<div class="b" style="left:977px;top:491.5px;width:23px;height:21.5px;background:#2b2b2b;border-top:1px solid #4a4a4a;"></div>
<svg class="b" style="left:981px;top:496px;" width="15" height="15" viewBox="0 0 15 15"><circle cx="7.5" cy="7.5" r="4.7" fill="none" stroke="#f2f2f2" stroke-width="1.1"/><circle cx="7.5" cy="7.5" r="6" fill="none" stroke="#f2f2f2" stroke-width="1.7" stroke-dasharray="2.1 2.612" transform="rotate(-12 7.5 7.5)"/><circle cx="7.5" cy="7.5" r="2.1" fill="none" stroke="#f2f2f2" stroke-width="1.1"/></svg>
<svg class="b" style="left:-5px;top:459px;" width="60" height="54" viewBox="0 0 60 54"><circle cx="30" cy="30" r="26.5" fill="rgba(160,205,90,0.14)" stroke="rgba(120,165,195,0.22)" stroke-width="3"/><path d="M14 14 C22 14 34 20 35 42 C24 40 13 30 14 14Z" fill="rgba(30,70,80,0.28)"/><path d="M30 22 C34 17 40 14 45 14 C45 24 42 32 37 38 C36 32 34 27 30 22Z" fill="rgba(140,195,70,0.30)"/></svg>
<svg class="b" style="left:17px;top:58px;" width="22" height="24" viewBox="0 0 22 24"><path d="M1.5 3.5 H5.5 M10.5 3.5 H16 V9.5 M1.5 3.5 V21.5 H10.5" fill="none" stroke="#8a6a3a" stroke-width="1.30" /><path d="M5.5 4.5 V2.8 H7 L8 1 L9 2.8 H10.5 V4.5" fill="none" stroke="#777" stroke-width="1.00" /><rect x="11.5" y="10.5" width="9" height="12" fill="none" stroke="#808080" stroke-width="1.10"/></svg>
<svg class="b" style="left:45px;top:57px;" width="9" height="12" viewBox="0 0 9 12"><path d="M1.5 0.5 L6.5 8.5 M7.5 0.5 L2.5 8.5" fill="none" stroke="#9a9a9a" stroke-width="1.00" /><circle cx="2.2" cy="10" r="1.5" fill="none" stroke="#4d86a8" stroke-width="0.9"/><circle cx="6.8" cy="10" r="1.5" fill="none" stroke="#4d86a8" stroke-width="0.9"/></svg>
<svg class="b" style="left:44px;top:76px;" width="13" height="12" viewBox="0 0 13 12"><path d="M3.5 9.5 H0.8 V0.8 H4.5 M4.5 2.8 H9 L12 5.8 V11.4 H4.5Z M9 2.8 V5.8 H12 M6.5 7.8 H10 M6.5 9.5 H10" fill="none" stroke="#8a8a8a" stroke-width="0.90" /></svg>
<svg class="b" style="left:44px;top:94.5px;" width="13" height="12" viewBox="0 0 13 12"><path d="M11.5 0.8 L7.5 5 M9 6.5 L6 3.5 L2 6 L7.5 11 Z" fill="none" stroke="#8a8a8a" stroke-width="0.90" /><path d="M2 6 L0.8 8.5 L5 11.5 L7.5 11" fill="none" stroke="#a07a3a" stroke-width="1.00" /><path d="M2 8.5 L4.5 10.5" fill="none" stroke="#a07a3a" stroke-width="0.80" /></svg>
<svg class="b" style="left:76px;top:58px;" width="23" height="24" viewBox="0 0 23 24"><ellipse cx="9" cy="4" rx="7.5" ry="3.2" fill="none" stroke="#f2f2f2" stroke-width="1.2"/><path d="M1.5 4 V18.5 C1.5 20.5 5 22 9 21.8 M16.5 4 V10" fill="none" stroke="#f2f2f2" stroke-width="1.20" /><rect x="10.3" y="11" width="11.6" height="11.6" fill="#272727" stroke="#f2f2f2" stroke-width="1.10"/><path d="M10.3 14 H21.9 M10.3 17 H21.9 M10.3 20 H21.9 M14.2 11 V22.6 M18 11 V22.6" fill="none" stroke="#f2f2f2" stroke-width="0.80" /></svg>
<svg class="b" style="left:104px;top:56.5px;" width="12" height="13" viewBox="0 0 12 13"><path d="M1 0.7 H6.5 L9.5 3.7 V5 M6.5 0.7 V3.7 H9.5 M1 0.7 V12 H4" fill="none" stroke="#f2f2f2" stroke-width="1.00" /><rect x="4.2" y="5.2" width="7" height="7" fill="#1f9d55"/><path d="M6.2 7 L9.2 10.4 M9.2 7 L6.2 10.4" fill="none" stroke="#fff" stroke-width="0.90" /></svg>
<svg class="b" style="left:104px;top:76.5px;" width="11" height="11" viewBox="0 0 11 11"><circle cx="5.5" cy="5.5" r="4.6" fill="none" stroke="#f2f2f2" stroke-width="1.2"/><path d="M2.5 4 C4 7 7 7.5 10 5.5 M4 2 C3.5 4.5 5 6.5 7 6.8" fill="none" stroke="#f2f2f2" stroke-width="1.00" /></svg>
<svg class="b" style="left:104px;top:94.5px;" width="12" height="13" viewBox="0 0 12 13"><path d="M6.5 0.7 H1 V12 H4 M6.5 0.7 L9.5 3.7 V6 M6.5 0.7 V3.7 H9.5" fill="none" stroke="#f2f2f2" stroke-width="1.00" /><rect x="5" y="7" width="6" height="5.3" fill="none" stroke="#e8b84a" stroke-width="1.10"/><path d="M5 8.5 C6.5 9.6 9.5 9.6 11 8.5" fill="none" stroke="#e8b84a" stroke-width="0.80" /></svg>
<svg class="b" style="left:194.5px;top:56.5px;" width="13" height="13" viewBox="0 0 13 13"><rect x="1" y="2.5" width="11.4" height="9.8" fill="none" stroke="#f2f2f2" stroke-width="1.00"/><path d="M1 5.7 H12.4 M1 9 H12.4 M4.8 2.5 V12.3 M8.6 2.5 V12.3" fill="none" stroke="#f2f2f2" stroke-width="0.80" /><path d="M2.5 0 V4.6 M0.2 2.3 H4.8" fill="none" stroke="#3fbf6f" stroke-width="1.20" /></svg>
<svg class="b" style="left:194.5px;top:76.5px;" width="13" height="11" viewBox="0 0 13 11"><path d="M9.5 2 C7 0 1 1.5 1 5.5 C1 8.5 4 9.8 6 9 M3.5 9 C6 11 12 9.5 12 5.5 C12 2.5 9 1.2 7 2 M4 6.5 C4 4 9 4 9 4.5 C9 7 4 7 4 6.5" fill="none" stroke="#f2f2f2" stroke-width="1.10" /></svg>
<svg class="b" style="left:196.5px;top:95px;" width="12" height="13" viewBox="0 0 12 13"><path d="M5.5 0.7 H1 V11.8 H4.5 M5.5 0.7 L8.5 3.7 V5.5 M5.5 0.7 V3.7 H8.5" fill="none" stroke="#f2f2f2" stroke-width="1.00" /><circle cx="7.3" cy="8.6" r="3.3" fill="#272727" stroke="#3d9be9" stroke-width="1.1"/><path d="M7.3 6.8 V8.8 H8.8" fill="none" stroke="#3d9be9" stroke-width="0.90" /></svg>
<svg class="b" style="left:300.5px;top:58.5px;" width="25" height="24" viewBox="0 0 25 24"><rect x="1" y="1" width="20" height="20" fill="none" stroke="#f2f2f2" stroke-width="1.30"/><path d="M1 5 H21 M1 10 H21 M1 15 H21 M7.6 5 V21 M14.2 5 V21" fill="none" stroke="#f2f2f2" stroke-width="1.00" /><path d="M21.8 7.2 L24.2 9.6 L11.3 21.5 L7.9 22.5 L8.9 19.1 Z" fill="#272727" stroke="#3d9be9" stroke-width="1.20" /><path d="M19.9 8.9 L22.3 11.3" fill="none" stroke="#3d9be9" stroke-width="0.90" /></svg>
<svg class="b" style="left:339.5px;top:58.5px;" width="23" height="24" viewBox="0 0 23 24"><path d="M1 1 H10.5 L16.8 7.3 V10.5 M10.5 1 V7.3 H16.8 M1 1 V21 H9.5" fill="none" stroke="#f2f2f2" stroke-width="1.30" /><path d="M11 15 A5 5 0 0 1 19.5 12.5 M20 18 A5 5 0 0 1 11.5 20.5" fill="none" stroke="#3fbf6f" stroke-width="1.40" /><path d="M20.2 10.3 V13.2 H17.3 M10.8 22.5 V19.7 H13.7" fill="none" stroke="#3fbf6f" stroke-width="1.10" /></svg>
<svg class="b" style="left:380px;top:58.5px;" width="24" height="24" viewBox="0 0 24 24"><rect x="1" y="9.8" width="5.6" height="11.2" fill="#1f6fd0"/><rect x="1" y="9.8" width="5.6" height="11.2" fill="none" stroke="#3d9be9" stroke-width="0.80"/><rect x="7.2" y="1" width="6.2" height="20" fill="none" stroke="#f2f2f2" stroke-width="1.20"/><rect x="13.8" y="5" width="6.2" height="16" fill="#6a6a6a"/><path d="M17 11 V21.5 M11.8 16.2 H22.2" fill="none" stroke="#3fbf6f" stroke-width="1.50" /></svg>
<svg class="b" style="left:599.5px;top:59.5px;" width="25" height="20" viewBox="0 0 25 20"><path d="M1.5 1.5 H23.5 M1.5 18.5 H23.5" fill="none" stroke="#7d9bb3" stroke-width="1.20" /><path d="M1.5 1.5 V18.5 M23.5 1.5 V18.5" fill="none" stroke="#f2f2f2" stroke-width="1.60" /><rect x="0.2" y="0.2" width="2.6" height="2.6" fill="#3d9be9"/><rect x="22.2" y="0.2" width="2.6" height="2.6" fill="#3d9be9"/><rect x="0.2" y="17.2" width="2.6" height="2.6" fill="#3d9be9"/><rect x="22.2" y="17.2" width="2.6" height="2.6" fill="#3d9be9"/><path d="M8.8 14.5 L12.5 4.5 L16.2 14.5 M10 11.3 H15" fill="none" stroke="#3d9be9" stroke-width="1.30" /></svg>
<svg class="b" style="left:635.5px;top:58.5px;" width="24" height="24" viewBox="0 0 24 24"><path d="M1 21 V9.5 H6.8 V1 H13 V4.5 H18.8 V21 Z M6.8 9.5 V21 M13 4.5 V21" fill="none" stroke="#f2f2f2" stroke-width="1.20" /><path d="M19.8 7.3 L22.2 9.7 L10.3 21.4 L6.9 22.5 L7.9 19 Z" fill="#272727" stroke="#3d9be9" stroke-width="1.20" /><path d="M18 9 L20.4 11.4" fill="none" stroke="#3d9be9" stroke-width="0.90" /></svg>
<svg class="b" style="left:693.5px;top:58.5px;" width="22" height="23" viewBox="0 0 22 23"><rect x="0.5" y="8.5" width="6" height="12.5" fill="#4a4a4a"/><rect x="6.5" y="0.8" width="6" height="20.2" fill="none" stroke="#666" stroke-width="1.00"/><rect x="13" y="4.3" width="5" height="3.6" fill="#2a4f75"/><text x="11.8" y="20.5" font-size="12.5" font-style="italic" fill="#707070" font-family="Liberation Serif">fx</text></svg>
<svg class="b" style="left:741px;top:58.8px;" width="16" height="22" viewBox="0 0 16 22"><rect x="0.7" y="0.7" width="14" height="20" fill="none" stroke="#f2f2f2" stroke-width="1.30" rx="1.6"/><rect x="3" y="3" width="9.4" height="3" fill="#1f6fd0" stroke="#3d9be9" stroke-width="0.70"/><rect x="3.0" y="8.6" width="2.2" height="2.2" fill="#f2f2f2"/><rect x="6.6" y="8.6" width="2.2" height="2.2" fill="#f2f2f2"/><rect x="10.2" y="8.6" width="2.2" height="2.2" fill="#f2f2f2"/><rect x="3.0" y="12.2" width="2.2" height="2.2" fill="#f2f2f2"/><rect x="6.6" y="12.2" width="2.2" height="2.2" fill="#f2f2f2"/><rect x="10.2" y="12.2" width="2.2" height="2.2" fill="#f2f2f2"/><rect x="3.0" y="15.8" width="2.2" height="2.2" fill="#f2f2f2"/><rect x="6.6" y="15.8" width="2.2" height="2.2" fill="#f2f2f2"/><rect x="10.2" y="15.8" width="2.2" height="2.2" fill="#f2f2f2"/></svg>
<svg class="b" style="left:777px;top:58.8px;" width="16" height="22" viewBox="0 0 16 22"><rect x="0.7" y="0.7" width="14" height="20" fill="none" stroke="#f2f2f2" stroke-width="1.30" rx="1.6"/><rect x="3" y="3" width="9.4" height="3" fill="#6a6a6a" stroke="#999" stroke-width="0.70"/><rect x="3.0" y="8.6" width="2.2" height="2.2" fill="#f2f2f2"/><rect x="6.6" y="8.6" width="2.2" height="2.2" fill="#f2f2f2"/><rect x="10.2" y="8.6" width="2.2" height="2.2" fill="#f2f2f2"/><rect x="3.0" y="12.2" width="2.2" height="2.2" fill="#f2f2f2"/><rect x="6.6" y="12.2" width="2.2" height="2.2" fill="#f2f2f2"/><rect x="10.2" y="12.2" width="2.2" height="2.2" fill="#f2f2f2"/><rect x="3.0" y="15.8" width="2.2" height="2.2" fill="#f2f2f2"/><rect x="6.6" y="15.8" width="2.2" height="2.2" fill="#f2f2f2"/><rect x="10.2" y="15.8" width="2.2" height="2.2" fill="#f2f2f2"/></svg>
<svg class="b" style="left:772px;top:58px;" width="11" height="15" viewBox="0 0 11 15"><path d="M6.2 0.3 L1 7.6 H4.4 L2.4 14.5 L9.8 5.6 H6.2 L8.6 0.3Z" fill="#f7a81c" /><path d="M6.2 0.3 L1 7.6 H4.4 L5.4 4.5Z" fill="#fdd24a" /></svg>
<svg class="b" style="left:827px;top:58.5px;" width="23" height="23" viewBox="0 0 23 23"><rect x="1" y="1.5" width="15.5" height="20" fill="none" stroke="#2b5877" stroke-width="1.10"/><path d="M12 4.5 L17.5 0.8 L21.5 6.2 L10 14 L6 8.5Z" fill="#272727" stroke="#34607f" stroke-width="1.10" /><path d="M8.6 9.2 L14 5.6" fill="none" stroke="#34607f" stroke-width="1.00" /></svg>
<svg class="b" style="left:876px;top:58.5px;" width="23" height="23" viewBox="0 0 23 23"><path d="M1 21 V12.8 H6.5 V21Z M6.5 21 V7.5 H11 M11 21 V3 C11 1 16.3 1 16.3 3 V10 M6.5 21 H13" fill="none" stroke="#f2f2f2" stroke-width="1.20" /><path d="M17.8 21.5 V11.5 M14.2 15 L17.8 11.2 L21.4 15" fill="none" stroke="#3d9be9" stroke-width="1.40" /></svg>
<svg class="b" style="left:930px;top:60px;" width="22" height="17" viewBox="0 0 22 17"><rect x="1.5" y="3.2" width="14.3" height="4.6" fill="#f2f2f2"/><rect x="1.5" y="11.2" width="14.3" height="4.6" fill="#f2f2f2"/><rect x="3.3" y="4.8" width="2" height="1.4" fill="#272727"/><rect x="3.3" y="12.8" width="2" height="1.4" fill="#272727"/><path d="M14 0 L15.2 3 L18.2 4.2 L15.2 5.4 L14 8.4 L12.8 5.4 L9.8 4.2 L12.8 3Z" fill="#3d9be9" stroke="#272727" stroke-width="0.60" /><path d="M18.3 5.2 L19 7 L20.8 7.7 L19 8.4 L18.3 10.2 L17.6 8.4 L15.8 7.7 L17.6 7Z" fill="#3d9be9" /></svg>
<svg class="b" style="left:970px;top:62px" width="6" height="13" viewBox="0 0 6 13"><defs><linearGradient id="cg" x1="0" y1="0" x2="0" y2="1"><stop offset="0" stop-color="#2a7de1"/><stop offset="0.55" stop-color="#4fc06a"/><stop offset="1" stop-color="#ffd23a"/></linearGradient></defs><path d="M4.6 0 C2 3 0 8 0.6 11 C1 13 3.5 13 5 12 V0Z" fill="url(#cg)"/></svg>
<svg class="b" style="left:412.25px;top:64.05px;" width="13.5" height="13.5" viewBox="0 0 14 14"><path d="M1.5 1 V12.5 H13.5" stroke="#f6f6f6" fill="none" stroke-width="1.25"/><rect x="2" y="2.2" width="3.5" height="3" fill="none" stroke="#f6f6f6" stroke-width="1.00"/><rect x="5.5" y="2.2" width="4" height="3" fill="#2b88d8"/><rect x="2" y="7.3" width="6" height="3" fill="#9a9a9a"/><rect x="8" y="7.3" width="4" height="3" fill="none" stroke="#f6f6f6" stroke-width="1.00"/></svg>
<svg class="b" style="left:431.25px;top:64.05px;" width="13.5" height="13.5" viewBox="0 0 14 14"><path d="M1.5 1 V12.5 H13.5" stroke="#f6f6f6" fill="none" stroke-width="1.25"/><rect x="3.8" y="2" width="3" height="4" fill="none" stroke="#f6f6f6" stroke-width="1.00"/><rect x="3.8" y="6" width="3" height="6.5" fill="#2b88d8"/><rect x="8.8" y="3" width="3" height="9.5" fill="none" stroke="#f6f6f6" stroke-width="1.00"/><rect x="8.8" y="7" width="3" height="5.5" fill="#9a9a9a"/></svg>
<svg class="b" style="left:450.55px;top:64.05px;" width="13.5" height="13.5" viewBox="0 0 14 14"><path d="M1.5 1 V12.5 H13.5" stroke="#f6f6f6" fill="none" stroke-width="1.25"/><rect x="2" y="1.8" width="9.5" height="2.6" fill="#2b88d8"/><rect x="2" y="5.2" width="6" height="2.6" fill="#9a9a9a"/><rect x="2" y="8.8" width="9" height="2.8" fill="none" stroke="#f6f6f6" stroke-width="1.00"/></svg>
<svg class="b" style="left:469.25px;top:64.05px;" width="13.5" height="13.5" viewBox="0 0 14 14"><path d="M1.5 1 V12.5 H13.5" stroke="#f6f6f6" fill="none" stroke-width="1.25"/><rect x="2.8" y="2" width="3" height="10.5" fill="#2b88d8"/><rect x="6.6" y="6.5" width="2.4" height="6" fill="#9a9a9a"/><rect x="10" y="4" width="2.6" height="8.5" fill="none" stroke="#f6f6f6" stroke-width="1.00"/></svg>
<svg class="b" style="left:488.25px;top:64.05px;" width="13.5" height="13.5" viewBox="0 0 14 14"><path d="M1.5 1 V12.5 H13.5" stroke="#f6f6f6" fill="none" stroke-width="1.25"/><rect x="2" y="2.2" width="6" height="3" fill="none" stroke="#f6f6f6" stroke-width="1.00"/><rect x="8" y="2.2" width="5" height="3" fill="#2b88d8"/><rect x="2" y="7.3" width="7" height="3" fill="#9a9a9a"/><rect x="9" y="7.3" width="4" height="3" fill="none" stroke="#f6f6f6" stroke-width="1.00"/></svg>
<svg class="b" style="left:507.25px;top:64.05px;" width="13.5" height="13.5" viewBox="0 0 14 14"><path d="M1.5 1 V12.5 H13.5" stroke="#f6f6f6" fill="none" stroke-width="1.25"/><rect x="3.5" y="4" width="2.6" height="8.5" fill="#2b88d8"/><rect x="3.5" y="2.5" width="2.6" height="2" fill="none" stroke="#f6f6f6" stroke-width="0.75"/><rect x="8.6" y="5" width="2.6" height="7.5" fill="#2b88d8"/><rect x="8.6" y="2.5" width="2.6" height="2.5" fill="#9a9a9a"/><path d="M2 10 L5 7.5 L8 9 L12.5 4.5" fill="none" stroke="#f6f6f6" stroke-width="1.00" /></svg>
<svg class="b" style="left:526.95px;top:64.05px;" width="13.5" height="13.5" viewBox="0 0 14 14"><path d="M1.5 1 V12.5 H13.5" stroke="#f6f6f6" fill="none" stroke-width="1.25"/><path d="M2 10 L5 6 L7.5 8 L12.5 3" fill="none" stroke="#f6f6f6" stroke-width="1.12" /><path d="M2 8 L6 4.2 L8.5 7 L12.5 5" fill="none" stroke="#2b88d8" stroke-width="1.12" /></svg>
<svg class="b" style="left:545.75px;top:64.05px;" width="13.5" height="13.5" viewBox="0 0 14 14"><path d="M1.5 12.5 L6 4.5 L8.5 9 L10.5 6 L13 12.5Z" fill="#2b88d8" /><path d="M1 12.8 L6 3.2 L8 7 L10.5 2.5 L13.5 12.8Z" fill="none" stroke="#f6f6f6" stroke-width="1.00" /><path d="M9.3 5 L10.5 2.8 L13 11.5 L10.5 6.5Z" fill="#9a9a9a" /></svg>
<svg class="b" style="left:565.25px;top:64.05px;" width="13.5" height="13.5" viewBox="0 0 14 14"><rect x="1.2" y="1.5" width="10.5" height="10.5" fill="none" stroke="#f6f6f6" stroke-width="1.00"/><path d="M1.2 3.6 H11.7" fill="none" stroke="#f6f6f6" stroke-width="0.88" /><rect x="3" y="5.3" width="2.2" height="1.6" fill="#f6f6f6"/><rect x="3" y="8.3" width="2.2" height="1.6" fill="#f6f6f6"/><path d="M7.2 6 H13.6 L11.3 8.8 V12.6 L9.5 11.6 V8.8Z" fill="#111" stroke="#f6f6f6" stroke-width="1.00" /></svg>
<svg class="b" style="left:412.25px;top:85.25px;" width="13.5" height="13.5" viewBox="0 0 14 14"><circle cx="7" cy="7" r="5.8" fill="none" stroke="#f2f2f2" stroke-width="0.9"/><path d="M7 7 V1.2 A5.8 5.8 0 0 1 12 10Z" fill="#2b88d8" /><path d="M7 1.2 V7 L12 10" fill="none" stroke="#f6f6f6" stroke-width="1.00" /></svg>
<svg class="b" style="left:431.25px;top:85.25px;" width="13.5" height="13.5" viewBox="0 0 14 14"><circle cx="7" cy="7" r="4.6" fill="none" stroke="#4a4a4a" stroke-width="2.6"/><path d="M7 2.4 A4.6 4.6 0 0 1 11.4 8.5" fill="none" stroke="#2b88d8" stroke-width="3.25" /></svg>
<svg class="b" style="left:450.55px;top:85.25px;" width="13.5" height="13.5" viewBox="0 0 14 14"><rect x="1" y="1" width="6" height="6" fill="#2b88d8"/><rect x="1" y="7.8" width="6" height="5.2" fill="#2b88d8"/><rect x="7.8" y="1" width="5.2" height="4" fill="none" stroke="#f6f6f6" stroke-width="1.00"/><rect x="7.8" y="5.8" width="5.2" height="7.2" fill="none" stroke="#f6f6f6" stroke-width="1.00"/><rect x="8.6" y="6.6" width="3.6" height="2.6" fill="#9a9a9a"/></svg>
<svg class="b" style="left:469.25px;top:85.25px;" width="13.5" height="13.5" viewBox="0 0 14 14"><circle cx="7" cy="6" r="4.6" fill="none" stroke="#f2f2f2" stroke-width="0.9"/><path d="M5 3.5 C6 2.5 8 3 7.5 4.5 S5.5 6 5 5Z M7.5 6.5 C9 6 10 7 9.5 8.5 S7.5 9 7.5 7.5Z" fill="#3fbf6f" /><path d="M2.5 2.5 C0 6 2 11.5 7 11.8 M7 11.8 V13 M4 13.3 H10" fill="none" stroke="#f6f6f6" stroke-width="1.00" /></svg>
<svg class="b" style="left:488.25px;top:85.25px;" width="13.5" height="13.5" viewBox="0 0 14 14"><path d="M1.5 10.5 A5.7 5.7 0 0 1 12.5 10.5" fill="none" stroke="#f6f6f6" stroke-width="1.12" /><path d="M3.8 10.5 A3.4 3.4 0 0 1 10.2 10.5" fill="none" stroke="#f6f6f6" stroke-width="1.00" /><path d="M2.8 6.5 A6 6 0 0 1 9.5 5 L8.6 7.4 A3.4 3.4 0 0 0 4.8 8.2Z" fill="#2b88d8" /><path d="M1.5 10.5 H3.8 M10.2 10.5 H12.5" fill="none" stroke="#f6f6f6" stroke-width="1.00" /></svg>
<svg class="b" style="left:507.25px;top:85.25px;" width="13.5" height="13.5" viewBox="0 0 14 14"><rect x="1" y="2.5" width="12" height="9" fill="none" stroke="#f6f6f6" stroke-width="1.12"/><rect x="2.8" y="4.3" width="8.4" height="5.4" fill="#2b6cb0"/><path d="M2.8 9.7 L5.5 6.5 L7.5 8.5 L9 7 L11.2 9.7Z" fill="#7fb6ea" /></svg>
<svg class="b" style="left:526.95px;top:85.25px;" width="13.5" height="13.5" viewBox="0 0 14 14"><rect x="1.2" y="1.5" width="11.6" height="11" fill="none" stroke="#f6f6f6" stroke-width="1.12"/><path d="M3.2 4.2 H10.5 M3.2 9.2 H10.5" fill="none" stroke="#f6f6f6" stroke-width="1.12" /><path d="M3.2 6.7 H8" fill="none" stroke="#2b88d8" stroke-width="1.12" /><path d="M3.2 11 H7" fill="none" stroke="#9a9a9a" stroke-width="0.75" /></svg>
<svg class="b" style="left:545.75px;top:85.25px;" width="13.5" height="13.5" viewBox="0 0 14 14"><rect x="1.2" y="2" width="11.6" height="10.5" fill="none" stroke="#f6f6f6" stroke-width="1.00"/><path d="M1.2 3.8 H12.8 M1.2 6.8 H12.8 M1.2 9.7 H12.8 M5.1 2 V12.5 M9 2 V12.5" fill="none" stroke="#f6f6f6" stroke-width="0.88" /></svg>
<svg class="b" style="left:565.25px;top:85.25px;" width="13.5" height="13.5" viewBox="0 0 14 14"><rect x="5.1" y="6.8" width="7.7" height="5.7" fill="#2b88d8"/><rect x="1.2" y="2" width="11.6" height="10.5" fill="none" stroke="#f6f6f6" stroke-width="1.00"/><path d="M1.2 3.8 H12.8 M1.2 6.8 H12.8 M1.2 9.7 H12.8 M5.1 2 V12.5 M9 2 V12.5" fill="none" stroke="#f6f6f6" stroke-width="0.88" /></svg>
<svg class="b" style="left:9.5px;top:133px;" width="12" height="12" viewBox="0 0 12 12"><path d="M1 0.6 V11 H11.6" fill="none" stroke="#f4f4f4" stroke-width="1.10" /><rect x="2.9" y="4.8" width="2" height="6.2" fill="none" stroke="#f4f4f4" stroke-width="0.80"/><rect x="5.7" y="2.2" width="2" height="8.8" fill="none" stroke="#f4f4f4" stroke-width="0.80"/><rect x="8.5" y="4" width="2" height="7" fill="none" stroke="#f4f4f4" stroke-width="0.80"/></svg>
<svg class="b" style="left:10px;top:162.5px;" width="12" height="12" viewBox="0 0 12 12"><rect x="0.7" y="0.7" width="10.6" height="10.6" fill="none" stroke="#f4f4f4" stroke-width="1.10" rx="1.2"/><path d="M0.7 4.2 H11.3 M0.7 7.7 H11.3 M4.2 0.7 V11.3 M7.8 0.7 V11.3" fill="none" stroke="#f4f4f4" stroke-width="0.90" /></svg>
<svg class="b" style="left:8.5px;top:190px;" width="14" height="15" viewBox="0 0 14 15"><rect x="5.6" y="0.7" width="7.6" height="5.4" fill="none" stroke="#f4f4f4" stroke-width="1.00"/><path d="M5.6 2.8 H13.2" fill="none" stroke="#f4f4f4" stroke-width="0.80" /><rect x="0.7" y="4.4" width="5.6" height="6" fill="#151515" stroke="#f4f4f4" stroke-width="1.00"/><path d="M0.7 6.6 H6.3" fill="none" stroke="#f4f4f4" stroke-width="0.80" /><rect x="7.4" y="8" width="5.8" height="6" fill="none" stroke="#f4f4f4" stroke-width="1.00"/><path d="M7.4 10.2 H13.2 M6.3 7 H8.6 V8" fill="none" stroke="#f4f4f4" stroke-width="0.80" /></svg>
<svg class="b" style="left:8.5px;top:220.5px;" width="14" height="13.5" viewBox="0 0 14 13.5"><path d="M3.2 8 V0.7 H7.8 L11.0 4 V8 M7.8 0.7 V4 H11.0" fill="none" stroke="#f4f4f4" stroke-width="1.00" /><path d="M3.2 8 V11.5 C3.2 12.6 11.0 12.6 11.0 11.5 V8" fill="none" stroke="#f4f4f4" stroke-width="1.00" /><rect x="0" y="7.4" width="14" height="4.6" fill="#151515"/><text x="7.0" y="11.8" font-size="5.4" font-weight="bold" text-anchor="middle" fill="#f4f4f4" font-family="Liberation Sans" textLength="11.5" lengthAdjust="spacingAndGlyphs">DAX</text></svg>
<svg class="b" style="left:7.5px;top:249px;" width="16" height="13.5" viewBox="0 0 16 13.5"><path d="M4.2 8 V0.7 H8.8 L12.0 4 V8 M8.8 0.7 V4 H12.0" fill="none" stroke="#f4f4f4" stroke-width="1.00" /><path d="M4.2 8 V11.5 C4.2 12.6 12.0 12.6 12.0 11.5 V8" fill="none" stroke="#f4f4f4" stroke-width="1.00" /><rect x="0" y="7.4" width="16" height="4.6" fill="#151515"/><text x="8.0" y="11.8" font-size="5.4" font-weight="bold" text-anchor="middle" fill="#f4f4f4" font-family="Liberation Sans" textLength="14.5" lengthAdjust="spacingAndGlyphs">TMDL</text></svg>
</div></body></html>
